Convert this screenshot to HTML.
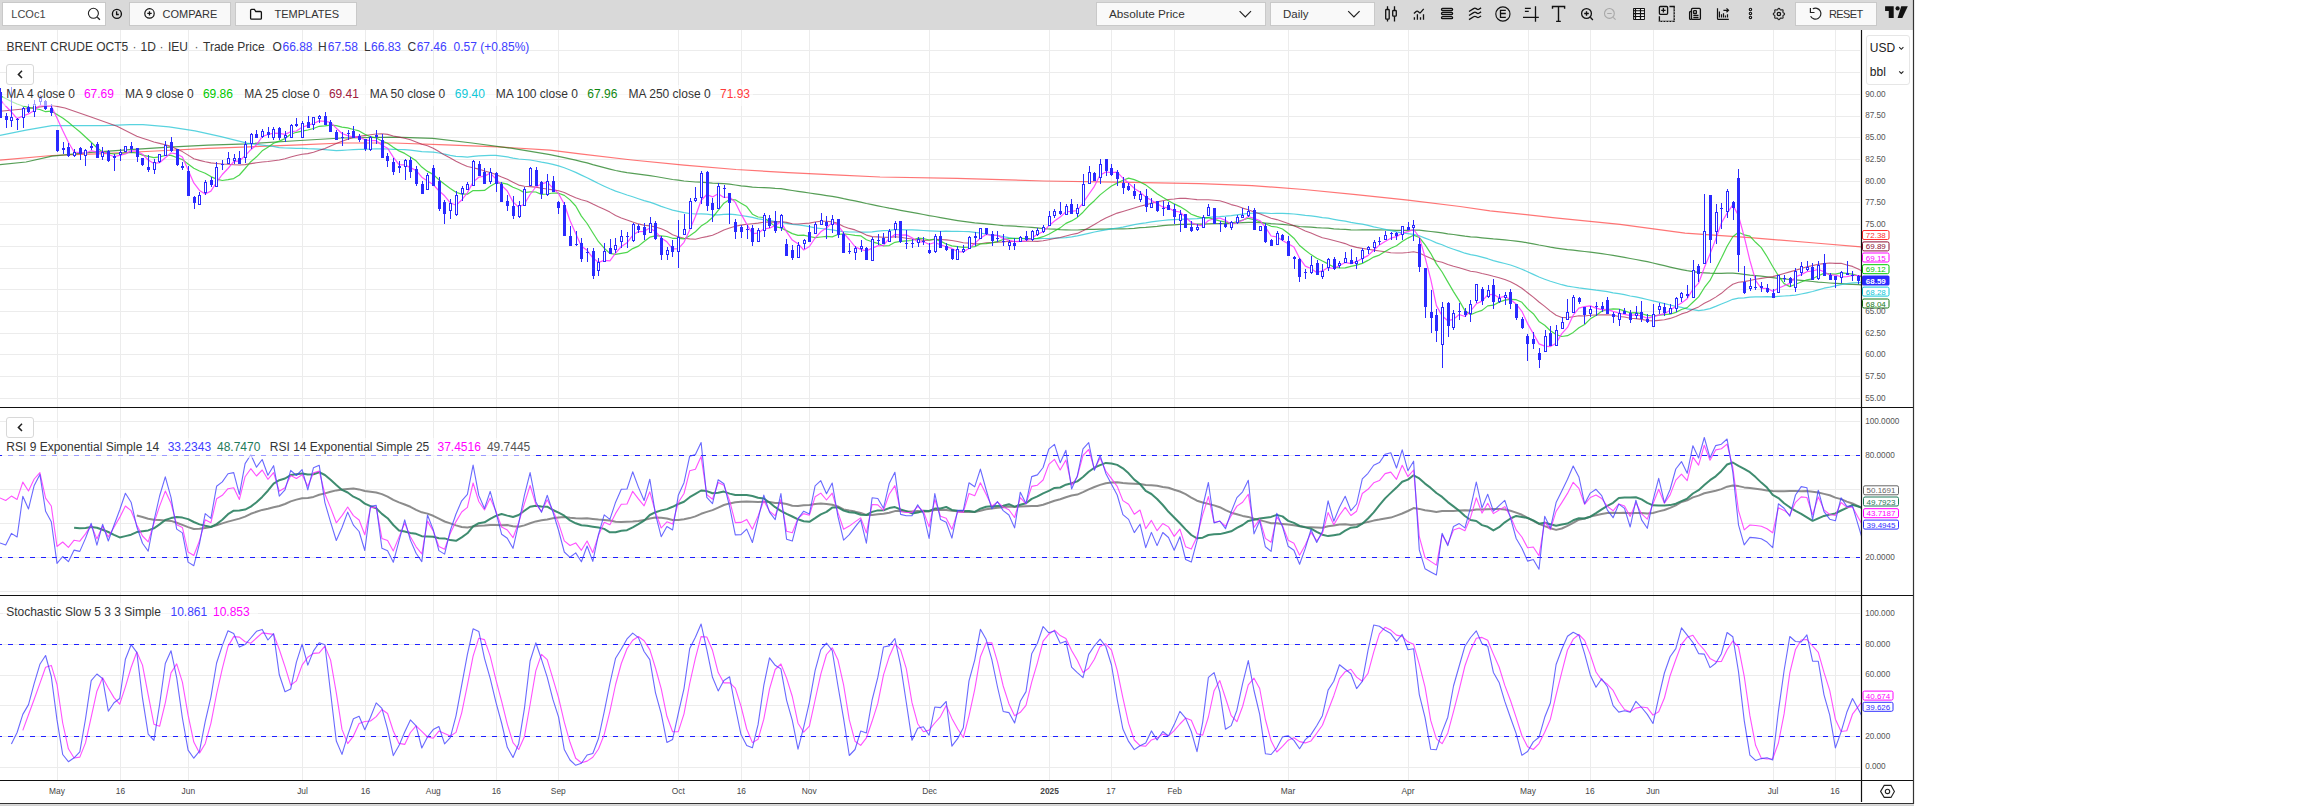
<!DOCTYPE html>
<html><head><meta charset="utf-8"><style>
html,body{margin:0;padding:0;background:#fff;width:2304px;height:806px;overflow:hidden;position:relative;font-family:'Liberation Sans',sans-serif;}
</style></head><body>
<div style="position:absolute;left:0;top:0;width:1913px;height:30px;background:#d9d9d9"></div><div style="position:absolute;left:2px;top:2px;width:104px;height:24px;box-sizing:border-box;background:#fff;border:1px solid #c9c9c9"></div><div style="position:absolute;left:11.3px;top:8.18px;font-size:11px;line-height:12.65px;color:#444;white-space:nowrap;font-family:'Liberation Sans',sans-serif;">LCOc1</div><div style="position:absolute;left:129px;top:2px;width:102px;height:24px;box-sizing:border-box;background:#f9f9f9;border:1px solid #c9c9c9"></div><div style="position:absolute;left:162.6px;top:8.18px;font-size:11px;line-height:12.65px;color:#333;white-space:nowrap;font-family:'Liberation Sans',sans-serif;">COMPARE</div><div style="position:absolute;left:235px;top:2px;width:122px;height:24px;box-sizing:border-box;background:#f9f9f9;border:1px solid #c9c9c9"></div><div style="position:absolute;left:274.5px;top:8.18px;font-size:11px;line-height:12.65px;color:#333;white-space:nowrap;font-family:'Liberation Sans',sans-serif;">TEMPLATES</div><div style="position:absolute;left:1096px;top:2px;width:170px;height:24px;box-sizing:border-box;background:#f9f9f9;border:1px solid #c9c9c9"></div><div style="position:absolute;left:1109px;top:7.49px;font-size:11.75px;line-height:13.51px;color:#333;white-space:nowrap;font-family:'Liberation Sans',sans-serif;">Absolute Price</div><div style="position:absolute;left:1270px;top:2px;width:105px;height:24px;box-sizing:border-box;background:#f9f9f9;border:1px solid #c9c9c9"></div><div style="position:absolute;left:1283px;top:7.72px;font-size:11.5px;line-height:13.22px;color:#333;white-space:nowrap;font-family:'Liberation Sans',sans-serif;">Daily</div><div style="position:absolute;left:1795px;top:2px;width:82px;height:24px;box-sizing:border-box;background:#f9f9f9;border:1px solid #c9c9c9"></div><div style="position:absolute;left:1829px;top:8.18px;font-size:11px;line-height:12.65px;color:#333;white-space:nowrap;font-family:'Liberation Sans',sans-serif;letter-spacing:-0.6px;">RESET</div><svg style="position:absolute;left:0;top:0" width="1913" height="30"><circle cx="93.4" cy="13.3" r="5" stroke="#222" fill="none" stroke-width="1.1"/><path d="M97.3 17.2l2.6 2.6" stroke="#222" stroke-width="1.3"/><circle cx="116.9" cy="13.9" r="4.5" stroke="#111" fill="none" stroke-width="1.35"/><path d="M116.6 11.2v3.3h2.2" stroke="#111" fill="none" stroke-width="1.3"/><circle cx="149.5" cy="13.4" r="4.7" stroke="#111" fill="none" stroke-width="1.2"/><path d="M149.5 11.2v4.4M147.3 13.4h4.4" stroke="#111" stroke-width="1.3"/><path d="M250.6 10.4a1 1 0 0 1 1-1h2.8l1.4 2.1h4.6a1 1 0 0 1 1 1v5.7a1 1 0 0 1-1 1h-8.8a1 1 0 0 1-1-1z" stroke="#111" fill="none" stroke-width="1.3"/><path d="M1239.6 11.2L1245.3 16.9L1251 11.2M1348.2 11.2L1353.9 16.9L1359.6 11.2" stroke="#222" fill="none" stroke-width="1.2"/><rect x="1385.7" y="9.5" width="3.5" height="9.7" rx="0.8" stroke="#111" fill="none" stroke-width="1.3"/><rect x="1392.7" y="10.5" width="3.6" height="5.7" rx="0.8" stroke="#111" fill="none" stroke-width="1.3"/><path d="M1387.5 6.2v3.3M1387.5 19.2v2.4M1394.5 6.2v4.3M1394.5 16.2v5.4" stroke="#111" fill="none" stroke-width="1.3"/><path d="M1413.9 13.6l2.6-2.3q0.6-0.5 1.2 0l1.6 1.3q0.6 0.4 1.2 0l3.2-3.7M1414.4 17.3v2.4M1417.4 14.3v5.4M1420.5 17.3v2.4M1423.5 14.3v5.4" stroke="#111" fill="none" stroke-width="1.3"/><rect x="1441.5" y="8.4" width="11.1" height="2.1" rx="1.05" stroke="#111" fill="none" stroke-width="1.3"/><rect x="1441.5" y="12.5" width="11.1" height="2.1" rx="1.05" stroke="#111" fill="none" stroke-width="1.3"/><rect x="1441.5" y="16.6" width="11.1" height="2.1" rx="1.05" stroke="#111" fill="none" stroke-width="1.3"/><path d="M1469 11.5l4.6-2.9q1.3-0.8 2.6 0l0.9 0.6q0.9 0.6 1.8 0l2.2-1.3" stroke="#111" fill="none" stroke-width="1.3"/><path d="M1469 15.5l4.6-2.9q1.3-0.8 2.6 0l0.9 0.6q0.9 0.6 1.8 0l2.2-1.3" stroke="#111" fill="none" stroke-width="1.3"/><path d="M1469 19.6l4.6-2.9q1.3-0.8 2.6 0l0.9 0.6q0.9 0.6 1.8 0l2.2-1.3" stroke="#111" fill="none" stroke-width="1.3"/><circle cx="1502.9" cy="14" r="7.1" stroke="#111" fill="none" stroke-width="1.15"/><path d="M1505.8 10.3h-5.3v7.15h5.3M1500.5 13.5h5.3" stroke="#111" fill="none" stroke-width="1.3"/><path d="M1535.5 6.2v15.6M1523 17.45h15.8M1524.9 8.4h5.9M1524.9 11.4h3.85" stroke="#111" fill="none" stroke-width="1.3"/><path d="M1552.5 8.8v-2.3h12.1v2.3M1558.5 6.5v14.9M1556.1 21.4h4.7" stroke="#111" fill="none" stroke-width="1.4"/><circle cx="1586.5" cy="13.46" r="4.9" stroke="#111" fill="none" stroke-width="1.3"/><path d="M1586.5 11.2v4.6M1584.2 13.5h4.6M1590.3 17.3l2.6 2.6" stroke="#111" fill="none" stroke-width="1.35"/><circle cx="1609.4" cy="13.46" r="4.9" stroke="#a8a8a8" fill="none" stroke-width="1.1"/><path d="M1607.2 13.5h4.5M1613.2 17.3l2.4 2.4" stroke="#a8a8a8" fill="none" stroke-width="1.1"/><rect x="1633" y="7.9" width="12" height="12" rx="0.8" fill="#111"/><rect x="1633.9" y="8.9" width="1.0" height="1.3" rx="0.4" fill="#f2f2f2"/><rect x="1636" y="8.9" width="4.0" height="1.3" rx="0.4" fill="#f2f2f2"/><rect x="1641" y="8.9" width="3.1" height="1.3" rx="0.4" fill="#f2f2f2"/><rect x="1633.9" y="11.2" width="1.0" height="1.7" rx="0.4" fill="#f2f2f2"/><rect x="1636" y="11.2" width="4.0" height="1.7" rx="0.4" fill="#f2f2f2"/><rect x="1641" y="11.2" width="3.1" height="1.7" rx="0.4" fill="#f2f2f2"/><rect x="1633.9" y="14.2" width="1.0" height="1.7" rx="0.4" fill="#f2f2f2"/><rect x="1636" y="14.2" width="4.0" height="1.7" rx="0.4" fill="#f2f2f2"/><rect x="1641" y="14.2" width="3.1" height="1.7" rx="0.4" fill="#f2f2f2"/><rect x="1633.9" y="17.1" width="1.0" height="1.8" rx="0.4" fill="#f2f2f2"/><rect x="1636" y="17.1" width="4.0" height="1.8" rx="0.4" fill="#f2f2f2"/><rect x="1641" y="17.1" width="3.1" height="1.8" rx="0.4" fill="#f2f2f2"/><rect x="1659.4" y="6.5" width="8.2" height="7.8" rx="1" stroke="#111" fill="none" stroke-width="1.3"/><path d="M1663.4 8.1v4.4M1661.2 10.3h4.4" stroke="#111" fill="none" stroke-width="1.3"/><path d="M1669.5 6.5h4.7v14.9h-14.8v-5.2" stroke="#111" fill="none" stroke-width="1.3"/><path d="M1674.2 8.5v12.9h-14.8" stroke="#d9d9d9" fill="none" stroke-width="0.8" stroke-dasharray="1.4,1.6" stroke-dashoffset="0.5"/><rect x="1691.5" y="8.4" width="8.9" height="11" rx="1" stroke="#111" fill="none" stroke-width="1.3"/><rect x="1693.6" y="10.7" width="2.8" height="2.8" rx="0.6" stroke="#111" fill="none" stroke-width="1.3"/><path d="M1693.3 15.4h5.2M1693.3 17.5h5.2M1691.5 11.5h-1a0.9 0.9 0 0 0-0.9 0.9v6.1a0.9 0.9 0 0 0 0.9 0.9h1" stroke="#111" fill="none" stroke-width="1.3"/><path d="M1717.5 8.2v10.2a1 1 0 0 0 1 1h10.3M1719.4 11.4v6M1721.5 14.2v3.2M1723.5 13.3v4.1M1725.45 15.4v2M1727.5 14.2v3.2M1723.4 10.3h5M1726.5 8.4l2 1.9-2 1.9" stroke="#111" fill="none" stroke-width="1.2"/><circle cx="1750.45" cy="9.5" r="1.2" stroke="#111" fill="none" stroke-width="1.1"/><circle cx="1750.45" cy="13.46" r="1.2" stroke="#111" fill="none" stroke-width="1.1"/><circle cx="1750.45" cy="17.45" r="1.2" stroke="#111" fill="none" stroke-width="1.1"/><polygon points="1784.55,14.00 1784.33,14.54 1783.80,14.98 1783.24,15.32 1782.92,15.66 1782.90,16.14 1783.06,16.78 1783.12,17.46 1782.90,18.00 1782.36,18.22 1781.68,18.16 1781.04,18.00 1780.56,18.02 1780.22,18.34 1779.88,18.90 1779.44,19.43 1778.90,19.65 1778.36,19.43 1777.92,18.90 1777.58,18.34 1777.24,18.02 1776.76,18.00 1776.12,18.16 1775.44,18.22 1774.90,18.00 1774.68,17.46 1774.74,16.78 1774.90,16.14 1774.88,15.66 1774.56,15.32 1774.00,14.98 1773.47,14.54 1773.25,14.00 1773.47,13.46 1774.00,13.02 1774.56,12.68 1774.88,12.34 1774.90,11.86 1774.74,11.22 1774.68,10.54 1774.90,10.00 1775.44,9.78 1776.12,9.84 1776.76,10.00 1777.24,9.98 1777.58,9.66 1777.92,9.10 1778.36,8.57 1778.90,8.35 1779.44,8.57 1779.88,9.10 1780.22,9.66 1780.56,9.98 1781.04,10.00 1781.68,9.84 1782.36,9.78 1782.90,10.00 1783.12,10.54 1783.06,11.22 1782.90,11.86 1782.92,12.34 1783.24,12.68 1783.80,13.02 1784.33,13.46" stroke="#222" fill="none" stroke-width="1.1"/><circle cx="1778.9" cy="14" r="1.7" stroke="#111" fill="none" stroke-width="1.3"/><path d="M1812.8 8.8A5.5 5.5 0 1 1 1810.6 16.3" stroke="#222" fill="none" stroke-width="1.2"/><path d="M1810.4 8v4.5h4.1" stroke="#222" fill="none" stroke-width="1.2"/><path d="M1885.1 6.25h8.6v11.75h-4.95v-7.1h-3.65z" fill="#111"/><circle cx="1897.6" cy="8.4" r="2.1" fill="#111"/><path d="M1901.25 6.25h6.55l-5.5 11.75h-4.7z" fill="#111"/></svg>
<svg width="2304" height="806" style="position:absolute;left:0;top:0"><line x1="57.5" y1="30" x2="57.5" y2="780" stroke="#ececec" stroke-width="1"/><line x1="120.5" y1="30" x2="120.5" y2="780" stroke="#ececec" stroke-width="1"/><line x1="188.5" y1="30" x2="188.5" y2="780" stroke="#ececec" stroke-width="1"/><line x1="302.5" y1="30" x2="302.5" y2="780" stroke="#ececec" stroke-width="1"/><line x1="365.5" y1="30" x2="365.5" y2="780" stroke="#ececec" stroke-width="1"/><line x1="433.5" y1="30" x2="433.5" y2="780" stroke="#ececec" stroke-width="1"/><line x1="496.5" y1="30" x2="496.5" y2="780" stroke="#ececec" stroke-width="1"/><line x1="558.5" y1="30" x2="558.5" y2="780" stroke="#ececec" stroke-width="1"/><line x1="678.5" y1="30" x2="678.5" y2="780" stroke="#ececec" stroke-width="1"/><line x1="741.5" y1="30" x2="741.5" y2="780" stroke="#ececec" stroke-width="1"/><line x1="809.5" y1="30" x2="809.5" y2="780" stroke="#ececec" stroke-width="1"/><line x1="929.5" y1="30" x2="929.5" y2="780" stroke="#ececec" stroke-width="1"/><line x1="1049.5" y1="30" x2="1049.5" y2="780" stroke="#ececec" stroke-width="1"/><line x1="1111.5" y1="30" x2="1111.5" y2="780" stroke="#ececec" stroke-width="1"/><line x1="1174.5" y1="30" x2="1174.5" y2="780" stroke="#ececec" stroke-width="1"/><line x1="1288.5" y1="30" x2="1288.5" y2="780" stroke="#ececec" stroke-width="1"/><line x1="1408.5" y1="30" x2="1408.5" y2="780" stroke="#ececec" stroke-width="1"/><line x1="1528.5" y1="30" x2="1528.5" y2="780" stroke="#ececec" stroke-width="1"/><line x1="1590.5" y1="30" x2="1590.5" y2="780" stroke="#ececec" stroke-width="1"/><line x1="1653.5" y1="30" x2="1653.5" y2="780" stroke="#ececec" stroke-width="1"/><line x1="1773.5" y1="30" x2="1773.5" y2="780" stroke="#ececec" stroke-width="1"/><line x1="1835.5" y1="30" x2="1835.5" y2="780" stroke="#ececec" stroke-width="1"/><line x1="0" y1="50.5" x2="1860" y2="50.5" stroke="#ececec" stroke-width="1"/><line x1="0" y1="72.5" x2="1860" y2="72.5" stroke="#ececec" stroke-width="1"/><line x1="0" y1="94.5" x2="1860" y2="94.5" stroke="#ececec" stroke-width="1"/><line x1="0" y1="116.5" x2="1860" y2="116.5" stroke="#ececec" stroke-width="1"/><line x1="0" y1="137.5" x2="1860" y2="137.5" stroke="#ececec" stroke-width="1"/><line x1="0" y1="159.5" x2="1860" y2="159.5" stroke="#ececec" stroke-width="1"/><line x1="0" y1="181.5" x2="1860" y2="181.5" stroke="#ececec" stroke-width="1"/><line x1="0" y1="202.5" x2="1860" y2="202.5" stroke="#ececec" stroke-width="1"/><line x1="0" y1="224.5" x2="1860" y2="224.5" stroke="#ececec" stroke-width="1"/><line x1="0" y1="246.5" x2="1860" y2="246.5" stroke="#ececec" stroke-width="1"/><line x1="0" y1="268.5" x2="1860" y2="268.5" stroke="#ececec" stroke-width="1"/><line x1="0" y1="289.5" x2="1860" y2="289.5" stroke="#ececec" stroke-width="1"/><line x1="0" y1="311.5" x2="1860" y2="311.5" stroke="#ececec" stroke-width="1"/><line x1="0" y1="333.5" x2="1860" y2="333.5" stroke="#ececec" stroke-width="1"/><line x1="0" y1="354.5" x2="1860" y2="354.5" stroke="#ececec" stroke-width="1"/><line x1="0" y1="376.5" x2="1860" y2="376.5" stroke="#ececec" stroke-width="1"/><line x1="0" y1="398.5" x2="1860" y2="398.5" stroke="#ececec" stroke-width="1"/><line x1="0" y1="421.5" x2="1860" y2="421.5" stroke="#ececec" stroke-width="1"/><line x1="0" y1="455.5" x2="1860" y2="455.5" stroke="#ececec" stroke-width="1"/><line x1="0" y1="489.5" x2="1860" y2="489.5" stroke="#ececec" stroke-width="1"/><line x1="0" y1="523.5" x2="1860" y2="523.5" stroke="#ececec" stroke-width="1"/><line x1="0" y1="557.5" x2="1860" y2="557.5" stroke="#ececec" stroke-width="1"/><line x1="0" y1="591.5" x2="1860" y2="591.5" stroke="#ececec" stroke-width="1"/><line x1="0" y1="613.5" x2="1860" y2="613.5" stroke="#ececec" stroke-width="1"/><line x1="0" y1="644.5" x2="1860" y2="644.5" stroke="#ececec" stroke-width="1"/><line x1="0" y1="675.5" x2="1860" y2="675.5" stroke="#ececec" stroke-width="1"/><line x1="0" y1="705.5" x2="1860" y2="705.5" stroke="#ececec" stroke-width="1"/><line x1="0" y1="736.5" x2="1860" y2="736.5" stroke="#ececec" stroke-width="1"/><line x1="0" y1="767.5" x2="1860" y2="767.5" stroke="#ececec" stroke-width="1"/><line x1="0" y1="455.5" x2="1860" y2="455.5" stroke="#2020ff" stroke-width="1" stroke-dasharray="5,6" stroke-dashoffset="3"/><line x1="0" y1="644.5" x2="1860" y2="644.5" stroke="#2020ff" stroke-width="1" stroke-dasharray="5,6" stroke-dashoffset="3"/><line x1="0" y1="557.5" x2="1860" y2="557.5" stroke="#2020ff" stroke-width="1" stroke-dasharray="5,6" stroke-dashoffset="3"/><line x1="0" y1="736.5" x2="1860" y2="736.5" stroke="#2020ff" stroke-width="1" stroke-dasharray="5,6" stroke-dashoffset="3"/><defs><clipPath id="cp"><rect x="0" y="30" width="1861" height="377"/></clipPath><clipPath id="cr"><rect x="0" y="408" width="1861" height="187"/></clipPath><clipPath id="cs"><rect x="0" y="596" width="1861" height="184"/></clipPath></defs><g clip-path="url(#cp)"><path d="M0.0,160.1 L52.0,155.5 L104.0,153.6 L156.0,151.0 L208.0,148.4 L260.0,146.4 L300.0,144.8 L342.0,143.0 L394.0,143.0 L446.0,144.9 L498.0,146.9 L550.0,150.1 L580.0,153.9 L632.0,160.0 L684.0,165.2 L736.0,169.5 L788.0,172.6 L840.0,175.2 L880.0,177.0 L957.0,178.4 L1044.0,181.0 L1130.0,182.4 L1200.0,183.7 L1252.0,185.6 L1304.0,189.5 L1356.0,194.7 L1408.0,200.2 L1460.0,206.5 L1490.0,210.8 L1555.0,217.8 L1620.0,224.3 L1685.0,233.2 L1750.0,237.6 L1815.0,243.0 L1861.0,246.9 L1862.0,247.0" fill="none" stroke="#ff3b3b" stroke-width="1.2" stroke-opacity="0.7" stroke-linejoin="round" /><path d="M0.0,164.7 L26.0,162.0 L52.0,156.2 L91.0,152.3 L130.0,149.7 L169.0,147.1 L208.0,145.1 L247.0,143.8 L300.0,140.5 L342.0,138.0 L394.0,137.1 L433.0,138.4 L472.0,143.0 L511.0,148.2 L550.0,154.7 L564.3,157.6 L570.0,158.9 L575.7,160.2 L581.4,161.6 L587.1,162.9 L592.8,164.6 L598.5,166.1 L604.2,167.6 L609.9,169.1 L615.6,170.5 L621.3,171.7 L627.0,172.6 L632.7,173.3 L638.4,174.1 L644.1,174.9 L649.8,175.6 L655.5,176.5 L661.2,177.5 L666.9,178.5 L672.6,179.5 L678.3,180.2 L684.0,181.0 L689.7,181.5 L695.4,182.0 L701.1,182.2 L706.8,182.7 L712.5,183.2 L718.2,183.3 L723.9,183.6 L729.6,184.1 L735.3,185.0 L741.0,185.8 L746.7,186.4 L752.4,187.1 L758.1,187.5 L763.8,187.6 L769.5,187.9 L775.2,188.4 L780.9,188.7 L786.6,189.6 L792.3,190.5 L798.0,191.4 L803.7,192.2 L809.4,193.0 L815.1,193.8 L820.8,194.7 L826.5,195.6 L832.2,196.4 L837.9,197.4 L843.6,198.7 L849.3,199.8 L855.0,200.9 L860.7,202.2 L866.4,203.5 L872.1,204.6 L877.8,205.8 L883.5,207.0 L889.2,208.2 L894.9,209.2 L900.6,210.3 L906.3,211.3 L912.0,212.4 L917.7,213.4 L923.4,214.5 L929.1,215.6 L934.8,216.5 L940.5,217.6 L946.2,218.7 L951.9,219.7 L957.6,220.6 L963.3,221.4 L969.0,222.1 L974.7,222.9 L980.4,223.4 L986.1,223.9 L991.8,224.4 L997.5,225.0 L1003.2,225.6 L1008.9,225.9 L1014.6,226.2 L1020.3,226.6 L1026.0,227.0 L1031.7,227.4 L1037.4,227.9 L1043.1,228.6 L1048.8,229.0 L1054.5,229.2 L1060.2,229.7 L1065.9,229.9 L1071.6,230.0 L1077.3,230.0 L1083.0,229.7 L1088.7,229.4 L1094.4,229.3 L1100.1,229.2 L1105.8,229.1 L1111.5,228.9 L1117.2,228.9 L1122.9,228.8 L1128.6,228.7 L1134.3,228.3 L1140.0,227.7 L1145.7,227.4 L1151.4,226.8 L1157.1,226.4 L1162.8,225.7 L1168.5,225.2 L1174.2,224.8 L1179.9,224.4 L1185.6,224.3 L1191.3,224.2 L1197.0,224.1 L1202.7,224.1 L1208.4,223.8 L1214.1,223.7 L1219.8,223.7 L1225.5,223.6 L1231.2,223.3 L1236.9,223.0 L1242.6,222.6 L1248.3,222.3 L1254.0,222.3 L1259.7,222.6 L1265.4,223.0 L1271.1,223.7 L1276.8,224.0 L1282.5,224.3 L1288.2,225.0 L1293.9,225.7 L1299.6,226.5 L1305.3,226.9 L1311.0,227.2 L1316.7,227.7 L1322.4,228.0 L1328.1,228.2 L1333.8,228.8 L1339.5,229.2 L1345.2,229.4 L1350.9,229.9 L1356.6,230.0 L1362.3,229.9 L1368.0,229.9 L1373.7,229.9 L1379.4,229.9 L1385.1,230.0 L1390.8,230.2 L1396.5,230.3 L1402.2,230.4 L1407.9,230.3 L1413.6,230.0 L1419.3,230.2 L1425.0,230.8 L1430.7,231.5 L1436.4,232.2 L1442.1,232.9 L1447.8,233.8 L1453.5,234.5 L1459.2,235.3 L1464.9,236.2 L1470.6,236.8 L1476.3,237.2 L1482.0,237.8 L1487.7,238.3 L1493.4,238.9 L1499.1,239.3 L1504.8,239.9 L1510.5,240.5 L1516.2,241.2 L1521.9,241.9 L1527.6,242.8 L1533.3,243.8 L1539.0,245.0 L1544.7,246.0 L1550.4,247.2 L1556.1,248.1 L1561.8,248.9 L1567.5,249.7 L1573.2,250.2 L1578.9,250.8 L1584.6,251.5 L1590.3,252.2 L1596.0,252.9 L1601.7,253.7 L1607.4,254.5 L1613.1,255.4 L1618.8,256.4 L1624.5,257.4 L1630.2,258.5 L1635.9,259.5 L1641.6,260.6 L1647.3,261.7 L1653.0,263.0 L1658.7,264.4 L1664.4,265.7 L1670.1,267.1 L1675.8,268.4 L1681.5,269.6 L1687.2,270.7 L1692.9,271.6 L1698.6,272.4 L1704.3,272.8 L1710.0,273.2 L1715.7,273.3 L1721.4,273.3 L1727.1,273.1 L1732.8,273.1 L1738.5,273.6 L1744.2,274.3 L1749.9,275.1 L1755.6,275.7 L1761.3,276.2 L1767.0,276.9 L1772.7,277.7 L1778.4,278.4 L1784.1,278.9 L1789.8,279.5 L1795.5,279.9 L1801.2,280.4 L1806.9,280.9 L1812.6,281.5 L1818.3,282.1 L1824.0,282.5 L1829.7,283.0 L1835.4,283.4 L1841.1,283.7 L1846.8,284.1 L1852.5,284.4 L1858.2,284.7 L1862.0,284.9" fill="none" stroke="#1e7d1e" stroke-width="1.2" stroke-opacity="0.75" stroke-linejoin="round" /><path d="M0.0,135.4 L26.0,130.2 L52.0,125.6 L78.0,125.6 L104.0,125.6 L130.0,124.7 L143.0,124.7 L169.0,126.9 L195.0,130.8 L221.0,136.7 L247.0,143.2 L273.0,146.4 L279.3,147.6 L285.0,148.0 L290.7,148.1 L296.4,148.3 L302.1,148.3 L307.8,148.7 L313.5,148.8 L319.2,149.1 L324.9,149.6 L330.6,150.1 L336.3,150.6 L342.0,150.3 L347.7,150.0 L353.4,149.6 L359.1,149.4 L364.8,149.3 L370.5,149.0 L376.2,148.8 L381.9,148.9 L387.6,149.0 L393.3,149.3 L399.0,149.5 L404.7,149.6 L410.4,150.1 L416.1,150.8 L421.8,151.6 L427.5,151.8 L433.2,152.1 L438.9,153.0 L444.6,154.2 L450.3,155.4 L456.0,156.3 L461.7,156.7 L467.4,157.1 L473.1,156.4 L478.8,155.8 L484.5,155.6 L490.2,155.4 L495.9,155.4 L501.6,156.1 L507.3,156.9 L513.0,158.1 L518.7,159.0 L524.4,159.5 L530.1,160.0 L535.8,161.0 L541.5,162.2 L547.2,163.2 L552.9,164.3 L558.6,165.9 L564.3,167.8 L570.0,170.0 L575.7,172.4 L581.4,175.1 L587.1,177.7 L592.8,180.6 L598.5,183.5 L604.2,186.2 L609.9,188.8 L615.6,191.1 L621.3,193.0 L627.0,195.0 L632.7,196.8 L638.4,198.7 L644.1,200.6 L649.8,202.1 L655.5,204.1 L661.2,206.4 L666.9,208.3 L672.6,210.1 L678.3,211.4 L684.0,212.7 L689.7,213.5 L695.4,214.0 L701.1,213.8 L706.8,214.1 L712.5,214.8 L718.2,214.8 L723.9,214.4 L729.6,214.1 L735.3,214.7 L741.0,215.5 L746.7,216.3 L752.4,217.4 L758.1,218.8 L763.8,219.6 L769.5,220.4 L775.2,221.6 L780.9,222.2 L786.6,223.3 L792.3,224.4 L798.0,224.9 L803.7,225.7 L809.4,226.7 L815.1,227.8 L820.8,228.5 L826.5,229.2 L832.2,229.9 L837.9,230.8 L843.6,231.7 L849.3,232.0 L855.0,232.0 L860.7,232.1 L866.4,232.1 L872.1,231.8 L877.8,231.1 L883.5,230.7 L889.2,230.3 L894.9,229.7 L900.6,229.6 L906.3,229.8 L912.0,229.9 L917.7,230.2 L923.4,230.5 L929.1,230.8 L934.8,231.1 L940.5,231.3 L946.2,231.2 L951.9,231.3 L957.6,231.3 L963.3,231.5 L969.0,231.7 L974.7,232.4 L980.4,233.0 L986.1,234.2 L991.8,234.9 L997.5,235.5 L1003.2,236.6 L1008.9,237.7 L1014.6,238.5 L1020.3,238.6 L1026.0,238.8 L1031.7,238.8 L1037.4,238.6 L1043.1,238.5 L1048.8,238.5 L1054.5,238.2 L1060.2,237.9 L1065.9,237.7 L1071.6,236.9 L1077.3,235.9 L1083.0,234.6 L1088.7,233.3 L1094.4,232.0 L1100.1,230.8 L1105.8,229.8 L1111.5,228.8 L1117.2,228.0 L1122.9,227.1 L1128.6,225.8 L1134.3,224.7 L1140.0,223.7 L1145.7,222.9 L1151.4,221.8 L1157.1,221.2 L1162.8,220.5 L1168.5,219.9 L1174.2,219.6 L1179.9,219.4 L1185.6,219.1 L1191.3,218.9 L1197.0,218.6 L1202.7,218.1 L1208.4,217.4 L1214.1,216.8 L1219.8,216.6 L1225.5,216.2 L1231.2,215.6 L1236.9,214.8 L1242.6,214.1 L1248.3,213.3 L1254.0,213.2 L1259.7,212.9 L1265.4,213.2 L1271.1,213.5 L1276.8,213.3 L1282.5,213.4 L1288.2,213.6 L1293.9,214.0 L1299.6,214.6 L1305.3,215.3 L1311.0,215.8 L1316.7,216.7 L1322.4,217.6 L1328.1,218.2 L1333.8,219.3 L1339.5,220.3 L1345.2,221.2 L1350.9,222.4 L1356.6,223.3 L1362.3,224.1 L1368.0,225.4 L1373.7,226.8 L1379.4,228.0 L1385.1,229.4 L1390.8,230.7 L1396.5,231.9 L1402.2,232.9 L1407.9,233.7 L1413.6,234.4 L1419.3,235.8 L1425.0,238.1 L1430.7,240.3 L1436.4,242.9 L1442.1,244.8 L1447.8,247.2 L1453.5,249.2 L1459.2,251.1 L1464.9,253.2 L1470.6,254.7 L1476.3,255.7 L1482.0,257.2 L1487.7,258.7 L1493.4,260.6 L1499.1,262.1 L1504.8,263.5 L1510.5,265.0 L1516.2,267.0 L1521.9,269.2 L1527.6,271.7 L1533.3,274.4 L1539.0,277.0 L1544.7,279.2 L1550.4,281.3 L1556.1,283.0 L1561.8,284.7 L1567.5,286.2 L1573.2,287.0 L1578.9,287.9 L1584.6,288.6 L1590.3,289.3 L1596.0,290.2 L1601.7,290.8 L1607.4,291.7 L1613.1,292.8 L1618.8,293.7 L1624.5,294.7 L1630.2,296.0 L1635.9,296.9 L1641.6,298.1 L1647.3,299.5 L1653.0,300.8 L1658.7,302.1 L1664.4,303.6 L1670.1,305.0 L1675.8,306.3 L1681.5,307.4 L1687.2,308.8 L1692.9,309.6 L1698.6,310.6 L1704.3,309.9 L1710.0,308.6 L1715.7,306.4 L1721.4,304.0 L1727.1,301.7 L1732.8,299.3 L1738.5,298.1 L1744.2,297.8 L1749.9,297.2 L1755.6,296.8 L1761.3,296.9 L1767.0,296.7 L1772.7,296.9 L1778.4,296.4 L1784.1,296.0 L1789.8,295.7 L1795.5,295.1 L1801.2,294.0 L1806.9,292.8 L1812.6,291.5 L1818.3,289.9 L1824.0,288.2 L1829.7,287.1 L1835.4,285.8 L1841.1,284.6 L1846.8,283.7 L1852.5,282.9 L1858.2,282.6 L1862.0,282.4" fill="none" stroke="#22c4d4" stroke-width="1.2" stroke-opacity="0.75" stroke-linejoin="round" /><path d="M0.0,111.3 L26.0,108.7 L52.0,105.4 L65.0,108.0 L91.0,117.0 L117.0,126.3 L136.8,136.3 L142.5,138.2 L148.2,140.1 L153.9,142.0 L159.6,143.4 L165.3,144.8 L171.0,146.4 L176.7,148.9 L182.4,151.6 L188.1,155.1 L193.8,158.7 L199.5,160.4 L205.2,161.8 L210.9,162.9 L216.6,163.5 L222.3,164.0 L228.0,164.3 L233.7,164.7 L239.4,165.0 L245.1,164.6 L250.8,163.6 L256.5,162.8 L262.2,162.0 L267.9,161.5 L273.6,160.7 L279.3,160.0 L285.0,158.8 L290.7,157.0 L296.4,155.5 L302.1,154.3 L307.8,153.6 L313.5,152.3 L319.2,150.3 L324.9,148.6 L330.6,146.0 L336.3,143.5 L342.0,141.2 L347.7,139.2 L353.4,137.4 L359.1,136.3 L364.8,135.6 L370.5,134.8 L376.2,134.0 L381.9,133.8 L387.6,134.4 L393.3,136.0 L399.0,137.1 L404.7,138.3 L410.4,139.7 L416.1,141.9 L421.8,144.2 L427.5,145.8 L433.2,148.2 L438.9,151.5 L444.6,155.1 L450.3,158.1 L456.0,161.3 L461.7,164.1 L467.4,166.5 L473.1,167.7 L478.8,169.1 L484.5,171.0 L490.2,172.5 L495.9,174.4 L501.6,176.9 L507.3,179.2 L513.0,182.3 L518.7,185.1 L524.4,186.3 L530.1,186.6 L535.8,187.1 L541.5,188.2 L547.2,189.0 L552.9,189.9 L558.6,190.8 L564.3,192.5 L570.0,195.3 L575.7,197.7 L581.4,199.7 L587.1,201.2 L592.8,204.1 L598.5,206.8 L604.2,209.3 L609.9,212.1 L615.6,215.5 L621.3,217.9 L627.0,220.0 L632.7,222.1 L638.4,223.9 L644.1,225.2 L649.8,225.9 L655.5,226.9 L661.2,228.8 L666.9,231.3 L672.6,234.7 L678.3,236.7 L684.0,238.2 L689.7,238.9 L695.4,239.2 L701.1,237.8 L706.8,236.6 L712.5,235.2 L718.2,232.8 L723.9,230.0 L729.6,228.1 L735.3,226.3 L741.0,225.1 L746.7,224.2 L752.4,223.7 L758.1,223.1 L763.8,222.3 L769.5,221.9 L775.2,222.1 L780.9,221.5 L786.6,222.4 L792.3,223.8 L798.0,224.0 L803.7,223.5 L809.4,223.1 L815.1,222.0 L820.8,221.3 L826.5,221.2 L832.2,221.9 L837.9,223.4 L843.6,226.6 L849.3,228.4 L855.0,229.9 L860.7,232.3 L866.4,235.1 L872.1,236.6 L877.8,236.9 L883.5,237.3 L889.2,237.4 L894.9,236.7 L900.6,237.2 L906.3,238.3 L912.0,239.0 L917.7,239.3 L923.4,240.4 L929.1,240.2 L934.8,239.4 L940.5,239.5 L946.2,239.9 L951.9,240.5 L957.6,241.5 L963.3,242.7 L969.0,243.1 L974.7,243.9 L980.4,243.7 L986.1,242.9 L991.8,242.5 L997.5,242.1 L1003.2,241.9 L1008.9,241.2 L1014.6,241.5 L1020.3,241.4 L1026.0,241.2 L1031.7,241.2 L1037.4,241.4 L1043.1,240.8 L1048.8,239.7 L1054.5,238.5 L1060.2,237.5 L1065.9,236.0 L1071.6,234.5 L1077.3,233.4 L1083.0,230.8 L1088.7,227.7 L1094.4,224.5 L1100.1,221.1 L1105.8,218.0 L1111.5,215.5 L1117.2,213.1 L1122.9,211.5 L1128.6,209.8 L1134.3,208.0 L1140.0,206.2 L1145.7,204.9 L1151.4,203.3 L1157.1,201.9 L1162.8,200.7 L1168.5,199.5 L1174.2,199.0 L1179.9,198.3 L1185.6,198.4 L1191.3,199.0 L1197.0,199.6 L1202.7,199.8 L1208.4,199.8 L1214.1,200.2 L1219.8,200.8 L1225.5,202.6 L1231.2,204.6 L1236.9,206.0 L1242.6,208.1 L1248.3,209.7 L1254.0,211.9 L1259.7,213.7 L1265.4,215.9 L1271.1,218.2 L1276.8,219.6 L1282.5,221.5 L1288.2,223.4 L1293.9,225.7 L1299.6,228.3 L1305.3,230.9 L1311.0,233.1 L1316.7,235.5 L1322.4,237.8 L1328.1,239.0 L1333.8,240.5 L1339.5,242.0 L1345.2,243.6 L1350.9,245.9 L1356.6,247.4 L1362.3,248.4 L1368.0,249.2 L1373.7,250.1 L1379.4,251.0 L1385.1,251.8 L1390.8,252.7 L1396.5,253.0 L1402.2,253.0 L1407.9,252.5 L1413.6,251.7 L1419.3,253.0 L1425.0,255.7 L1430.7,258.2 L1436.4,261.0 L1442.1,262.2 L1447.8,264.4 L1453.5,266.3 L1459.2,267.8 L1464.9,269.5 L1470.6,271.3 L1476.3,272.0 L1482.0,273.5 L1487.7,274.7 L1493.4,276.3 L1499.1,277.7 L1504.8,279.5 L1510.5,281.8 L1516.2,284.8 L1521.9,288.3 L1527.6,292.7 L1533.3,297.1 L1539.0,302.0 L1544.7,306.4 L1550.4,311.1 L1556.1,315.3 L1561.8,317.5 L1567.5,317.6 L1573.2,316.8 L1578.9,315.7 L1584.6,316.0 L1590.3,315.3 L1596.0,315.0 L1601.7,314.9 L1607.4,314.8 L1613.1,315.3 L1618.8,316.5 L1624.5,317.0 L1630.2,318.2 L1635.9,318.6 L1641.6,319.4 L1647.3,320.5 L1653.0,320.9 L1658.7,320.4 L1664.4,319.8 L1670.1,318.4 L1675.8,316.5 L1681.5,313.9 L1687.2,312.2 L1692.9,309.2 L1698.6,306.9 L1704.3,303.3 L1710.0,300.5 L1715.7,297.1 L1721.4,293.3 L1727.1,288.4 L1732.8,284.3 L1738.5,282.3 L1744.2,281.6 L1749.9,280.5 L1755.6,279.3 L1761.3,278.4 L1767.0,277.5 L1772.7,276.6 L1778.4,275.1 L1784.1,273.5 L1789.8,271.9 L1795.5,270.2 L1801.2,268.6 L1806.9,266.8 L1812.6,265.6 L1818.3,264.3 L1824.0,263.6 L1829.7,263.0 L1835.4,263.4 L1841.1,263.3 L1846.8,265.0 L1852.5,266.4 L1858.2,269.1 L1862.0,271.0" fill="none" stroke="#a81c4a" stroke-width="1.1" stroke-opacity="0.7" stroke-linejoin="round" /><path d="M0.0,95.5 L5.7,98.5 L11.4,101.5 L17.1,104.0 L22.8,106.0 L28.5,107.3 L34.2,108.5 L39.9,109.5 L45.6,111.7 L51.3,111.1 L57.0,114.6 L62.7,118.1 L68.4,122.2 L74.1,127.1 L79.8,131.8 L85.5,137.0 L91.2,142.3 L96.9,147.7 L102.6,152.0 L108.3,153.1 L114.0,154.0 L119.7,153.5 L125.4,152.8 L131.1,152.3 L136.8,153.0 L142.5,155.1 L148.2,156.4 L153.9,157.6 L159.6,156.8 L165.3,155.5 L171.0,155.4 L176.7,157.5 L182.4,159.6 L188.1,164.0 L193.8,168.2 L199.5,171.0 L205.2,173.2 L210.9,176.6 L216.6,179.1 L222.3,180.5 L228.0,179.7 L233.7,178.6 L239.4,175.0 L245.1,168.5 L250.8,161.7 L256.5,156.8 L262.2,150.8 L267.9,147.2 L273.6,143.3 L279.3,141.1 L285.0,138.6 L290.7,134.3 L296.4,132.3 L302.1,131.1 L307.8,130.0 L313.5,128.5 L319.2,126.3 L324.9,125.9 L330.6,125.2 L336.3,125.7 L342.0,127.1 L347.7,127.9 L353.4,129.5 L359.1,130.9 L364.8,134.3 L370.5,136.7 L376.2,138.0 L381.9,141.0 L387.6,143.2 L393.3,147.2 L399.0,150.9 L404.7,153.4 L410.4,156.9 L416.1,160.8 L421.8,167.1 L427.5,171.4 L433.2,174.4 L438.9,179.7 L444.6,184.3 L450.3,188.4 L456.0,192.3 L461.7,194.1 L467.4,194.2 L473.1,190.5 L478.8,190.6 L484.5,190.4 L490.2,186.3 L495.9,183.1 L501.6,182.9 L507.3,184.1 L513.0,187.2 L518.7,189.5 L524.4,192.6 L530.1,191.8 L535.8,192.0 L541.5,194.4 L547.2,194.0 L552.9,193.0 L558.6,193.2 L564.3,195.4 L570.0,199.9 L575.7,206.0 L581.4,216.1 L587.1,223.5 L592.8,232.7 L598.5,241.7 L604.2,248.2 L609.9,253.4 L615.6,254.4 L621.3,253.3 L627.0,252.4 L632.7,248.6 L638.4,246.1 L644.1,241.5 L649.8,237.2 L655.5,235.8 L661.2,235.8 L666.9,236.5 L672.6,238.3 L678.3,238.4 L684.0,238.9 L689.7,235.7 L695.4,231.7 L701.1,226.1 L706.8,222.5 L712.5,217.5 L718.2,210.4 L723.9,203.2 L729.6,199.5 L735.3,199.8 L741.0,203.2 L746.7,206.6 L752.4,214.2 L758.1,217.0 L763.8,217.5 L769.5,221.9 L775.2,226.6 L780.9,227.9 L786.6,230.6 L792.3,233.6 L798.0,235.4 L803.7,235.2 L809.4,236.5 L815.1,237.6 L820.8,237.0 L826.5,236.4 L832.2,236.9 L837.9,234.5 L843.6,233.9 L849.3,234.5 L855.0,235.4 L860.7,235.8 L866.4,239.7 L872.1,241.8 L877.8,243.3 L883.5,246.0 L889.2,245.6 L894.9,242.3 L900.6,241.3 L906.3,240.8 L912.0,240.5 L917.7,238.2 L923.4,238.5 L929.1,240.0 L934.8,239.2 L940.5,241.1 L946.2,244.0 L951.9,245.9 L957.6,246.6 L963.3,247.3 L969.0,247.1 L974.7,246.6 L980.4,243.9 L986.1,243.7 L991.8,242.9 L997.5,241.6 L1003.2,239.5 L1008.9,238.7 L1014.6,238.3 L1020.3,238.3 L1026.0,238.5 L1031.7,238.7 L1037.4,238.3 L1043.1,236.7 L1048.8,234.3 L1054.5,231.0 L1060.2,227.9 L1065.9,223.4 L1071.6,220.9 L1077.3,217.4 L1083.0,212.2 L1088.7,205.8 L1094.4,200.7 L1100.1,194.9 L1105.8,190.4 L1111.5,186.0 L1117.2,183.1 L1122.9,180.2 L1128.6,178.1 L1134.3,179.6 L1140.0,182.0 L1145.7,184.9 L1151.4,189.3 L1157.1,193.7 L1162.8,197.3 L1168.5,200.7 L1174.2,203.9 L1179.9,206.6 L1185.6,210.1 L1191.3,214.2 L1197.0,216.4 L1202.7,218.0 L1208.4,217.6 L1214.1,219.4 L1219.8,220.9 L1225.5,222.1 L1231.2,223.0 L1236.9,221.8 L1242.6,220.0 L1248.3,218.3 L1254.0,219.7 L1259.7,221.8 L1265.4,223.8 L1271.1,226.3 L1276.8,227.0 L1282.5,229.0 L1288.2,233.3 L1293.9,238.2 L1299.6,245.5 L1305.3,250.2 L1311.0,254.6 L1316.7,258.3 L1322.4,261.0 L1328.1,263.9 L1333.8,267.1 L1339.5,268.0 L1345.2,267.8 L1350.9,266.3 L1356.6,265.1 L1362.3,263.4 L1368.0,260.4 L1373.7,257.1 L1379.4,255.1 L1385.1,251.4 L1390.8,248.2 L1396.5,245.7 L1402.2,241.6 L1407.9,238.1 L1413.6,235.3 L1419.3,237.5 L1425.0,244.6 L1430.7,253.3 L1436.4,263.9 L1442.1,272.0 L1447.8,281.9 L1453.5,291.6 L1459.2,300.6 L1464.9,310.6 L1470.6,314.8 L1476.3,312.3 L1482.0,310.4 L1487.7,305.9 L1493.4,305.2 L1499.1,302.1 L1504.8,300.1 L1510.5,299.3 L1516.2,299.7 L1521.9,302.3 L1527.6,308.9 L1533.3,313.7 L1539.0,321.4 L1544.7,325.3 L1550.4,330.7 L1556.1,334.6 L1561.8,336.5 L1567.5,335.7 L1573.2,332.4 L1578.9,327.7 L1584.6,324.5 L1590.3,318.8 L1596.0,315.5 L1601.7,311.3 L1607.4,309.5 L1613.1,308.9 L1618.8,309.1 L1624.5,310.9 L1630.2,312.8 L1635.9,312.6 L1641.6,313.7 L1647.3,315.4 L1653.0,316.0 L1658.7,315.2 L1664.4,314.7 L1670.1,314.2 L1675.8,312.4 L1681.5,309.5 L1687.2,307.6 L1692.9,302.2 L1698.6,296.9 L1704.3,287.7 L1710.0,280.4 L1715.7,269.2 L1721.4,258.1 L1727.1,246.3 L1732.8,236.8 L1738.5,232.3 L1744.2,234.8 L1749.9,236.2 L1755.6,242.3 L1761.3,247.6 L1767.0,256.5 L1772.7,266.5 L1778.4,275.8 L1784.1,283.6 L1789.8,286.6 L1795.5,284.3 L1801.2,282.0 L1806.9,279.8 L1812.6,278.8 L1818.3,275.8 L1824.0,273.4 L1829.7,273.8 L1835.4,274.1 L1841.1,272.9 L1846.8,273.3 L1852.5,274.2 L1858.2,275.8 L1862.0,276.8" fill="none" stroke="#22cc22" stroke-width="1.2" stroke-opacity="0.8" stroke-linejoin="round" /><path d="M0.0,99.5 L5.7,106.0 L11.4,112.0 L17.1,118.6 L22.8,116.0 L28.5,113.9 L34.2,110.5 L39.9,105.4 L45.6,105.7 L51.3,106.1 L57.0,118.1 L62.7,130.6 L68.4,142.2 L74.1,152.0 L79.8,152.6 L85.5,153.0 L91.2,150.7 L96.9,152.0 L102.6,151.6 L108.3,154.2 L114.0,156.7 L119.7,155.3 L125.4,153.9 L131.1,150.9 L136.8,150.9 L142.5,154.2 L148.2,160.0 L153.9,163.4 L159.6,162.7 L165.3,157.7 L171.0,153.0 L176.7,153.8 L182.4,157.1 L188.1,170.0 L193.8,182.9 L199.5,190.4 L205.2,194.0 L210.9,191.1 L216.6,182.2 L222.3,174.5 L228.0,168.5 L233.7,161.7 L239.4,160.9 L245.1,155.8 L250.8,149.7 L256.5,144.8 L262.2,136.6 L267.9,134.5 L273.6,133.2 L279.3,133.3 L285.0,134.4 L290.7,131.8 L296.4,131.0 L302.1,127.3 L307.8,125.4 L313.5,123.5 L319.2,120.9 L324.9,121.4 L330.6,122.4 L336.3,128.2 L342.0,133.5 L347.7,135.6 L353.4,137.1 L359.1,136.9 L364.8,139.8 L370.5,140.7 L376.2,140.6 L381.9,145.2 L387.6,148.2 L393.3,157.1 L399.0,164.6 L404.7,164.9 L410.4,167.6 L416.1,170.4 L421.8,177.2 L427.5,181.0 L433.2,184.5 L438.9,190.8 L444.6,195.8 L450.3,202.8 L456.0,205.2 L461.7,200.0 L467.4,192.8 L473.1,182.1 L478.8,177.2 L484.5,176.1 L490.2,173.1 L495.9,178.9 L501.6,185.4 L507.3,191.0 L513.0,201.9 L518.7,207.2 L524.4,204.0 L530.1,194.5 L535.8,187.0 L541.5,184.0 L547.2,182.1 L552.9,188.2 L558.6,193.6 L564.3,204.3 L570.0,220.5 L575.7,233.4 L581.4,246.2 L587.1,250.3 L592.8,257.8 L598.5,262.4 L604.2,260.4 L609.9,260.9 L615.6,253.1 L621.3,246.5 L627.0,242.8 L632.7,235.3 L638.4,231.6 L644.1,231.3 L649.8,228.1 L655.5,231.7 L661.2,237.9 L666.9,241.8 L672.6,249.0 L678.3,248.7 L684.0,242.3 L689.7,230.0 L695.4,216.5 L701.1,200.5 L706.8,194.5 L712.5,196.9 L718.2,193.7 L723.9,197.5 L729.6,197.0 L735.3,202.4 L741.0,213.9 L746.7,224.1 L752.4,233.6 L758.1,233.2 L763.8,229.0 L769.5,228.2 L775.2,225.4 L780.9,221.7 L786.6,231.9 L792.3,240.1 L798.0,243.7 L803.7,250.0 L809.4,246.5 L815.1,238.0 L820.8,231.8 L826.5,228.1 L832.2,222.4 L837.9,225.0 L843.6,233.2 L849.3,239.5 L855.0,246.7 L860.7,249.4 L866.4,251.0 L872.1,248.1 L877.8,245.9 L883.5,245.4 L889.2,238.4 L894.9,234.4 L900.6,235.1 L906.3,234.9 L912.0,237.8 L917.7,241.8 L923.4,241.8 L929.1,244.2 L934.8,242.5 L940.5,244.8 L946.2,246.8 L951.9,248.4 L957.6,251.6 L963.3,251.8 L969.0,248.6 L974.7,243.4 L980.4,238.2 L986.1,234.5 L991.8,235.4 L997.5,235.4 L1003.2,238.4 L1008.9,240.4 L1014.6,241.7 L1020.3,241.3 L1026.0,241.0 L1031.7,238.2 L1037.4,234.3 L1043.1,231.8 L1048.8,225.9 L1054.5,221.0 L1060.2,217.1 L1065.9,211.7 L1071.6,211.3 L1077.3,210.5 L1083.0,202.9 L1088.7,194.5 L1094.4,186.3 L1100.1,175.1 L1105.8,172.0 L1111.5,172.7 L1117.2,172.1 L1122.9,178.2 L1128.6,183.0 L1134.3,188.4 L1140.0,192.1 L1145.7,196.9 L1151.4,200.2 L1157.1,203.8 L1162.8,207.1 L1168.5,207.8 L1174.2,211.2 L1179.9,212.0 L1185.6,217.2 L1191.3,222.5 L1197.0,225.0 L1202.7,225.9 L1208.4,220.5 L1214.1,218.8 L1219.8,218.0 L1225.5,220.4 L1231.2,224.2 L1236.9,222.5 L1242.6,220.5 L1248.3,216.5 L1254.0,218.4 L1259.7,220.5 L1265.4,227.2 L1271.1,236.0 L1276.8,236.8 L1282.5,240.5 L1288.2,243.8 L1293.9,247.1 L1299.6,258.2 L1305.3,266.1 L1311.0,268.5 L1316.7,272.4 L1322.4,270.9 L1328.1,267.6 L1333.8,268.5 L1339.5,265.6 L1345.2,262.4 L1350.9,263.6 L1356.6,261.6 L1362.3,258.4 L1368.0,255.6 L1373.7,250.2 L1379.4,245.1 L1385.1,241.4 L1390.8,238.2 L1396.5,236.7 L1402.2,233.1 L1407.9,231.7 L1413.6,229.5 L1419.3,237.0 L1425.0,257.1 L1430.7,279.2 L1436.4,305.6 L1442.1,315.8 L1447.8,320.7 L1453.5,319.4 L1459.2,314.5 L1464.9,316.5 L1470.6,311.0 L1476.3,303.8 L1482.0,301.1 L1487.7,294.9 L1493.4,294.3 L1499.1,297.7 L1504.8,296.3 L1510.5,299.7 L1516.2,304.0 L1521.9,311.3 L1527.6,323.6 L1533.3,333.6 L1539.0,343.9 L1544.7,346.1 L1550.4,346.6 L1556.1,343.2 L1561.8,333.6 L1567.5,327.4 L1573.2,315.2 L1578.9,308.1 L1584.6,306.6 L1590.3,305.9 L1596.0,308.1 L1601.7,309.7 L1607.4,309.4 L1613.1,311.4 L1618.8,313.0 L1624.5,314.3 L1630.2,315.7 L1635.9,314.7 L1641.6,316.2 L1647.3,318.1 L1653.0,316.8 L1658.7,315.2 L1664.4,313.7 L1670.1,310.3 L1675.8,306.2 L1681.5,302.9 L1687.2,298.7 L1692.9,289.3 L1698.6,283.2 L1704.3,267.8 L1710.0,254.0 L1715.7,239.4 L1721.4,223.0 L1727.1,213.1 L1732.8,204.9 L1738.5,215.7 L1744.2,236.7 L1749.9,260.5 L1755.6,280.3 L1761.3,288.5 L1767.0,288.3 L1772.7,291.2 L1778.4,288.3 L1784.1,285.8 L1789.8,283.4 L1795.5,276.8 L1801.2,274.6 L1806.9,271.7 L1812.6,271.0 L1818.3,269.4 L1824.0,271.7 L1829.7,274.9 L1835.4,275.1 L1841.1,276.8 L1846.8,276.7 L1852.5,275.4 L1858.2,275.5 L1862.0,275.5" fill="none" stroke="#ff33ff" stroke-width="1.2" stroke-opacity="0.85" stroke-linejoin="round" /><rect x="0" y="88" width="1" height="30" fill="#2a2aff"/><rect x="-1" y="92" width="3" height="26" fill="#2a2aff"/><rect x="6" y="113" width="1" height="15" fill="#2a2aff"/><rect x="5" y="116" width="3" height="4" fill="#2a2aff"/><rect x="11" y="87" width="1" height="40" fill="#2a2aff"/><rect x="10.5" y="117.5" width="2" height="3" fill="#fff" stroke="#2a2aff" stroke-width="1"/><rect x="17" y="118" width="1" height="12" fill="#2a2aff"/><rect x="16" y="119" width="3" height="1" fill="#2a2aff"/><rect x="23" y="107" width="1" height="21" fill="#2a2aff"/><rect x="22.5" y="108.5" width="2" height="9" fill="#fff" stroke="#2a2aff" stroke-width="1"/><rect x="28" y="104" width="1" height="9" fill="#2a2aff"/><rect x="27" y="107" width="3" height="5" fill="#2a2aff"/><rect x="34" y="100" width="1" height="17" fill="#2a2aff"/><rect x="33.5" y="104.5" width="2" height="7" fill="#fff" stroke="#2a2aff" stroke-width="1"/><rect x="40" y="95" width="1" height="10" fill="#2a2aff"/><rect x="39.5" y="98.5" width="2" height="3" fill="#fff" stroke="#2a2aff" stroke-width="1"/><rect x="45" y="100" width="1" height="10" fill="#2a2aff"/><rect x="44" y="101" width="3" height="8" fill="#2a2aff"/><rect x="51" y="104" width="1" height="12" fill="#2a2aff"/><rect x="50" y="108" width="3" height="5" fill="#2a2aff"/><rect x="57" y="130" width="1" height="22" fill="#2a2aff"/><rect x="56" y="130" width="3" height="21" fill="#2a2aff"/><rect x="63" y="142" width="1" height="12" fill="#2a2aff"/><rect x="62" y="148" width="3" height="2" fill="#2a2aff"/><rect x="68" y="143" width="1" height="14" fill="#2a2aff"/><rect x="67" y="147" width="3" height="9" fill="#2a2aff"/><rect x="74" y="149" width="1" height="8" fill="#2a2aff"/><rect x="73.5" y="152.5" width="2" height="3" fill="#fff" stroke="#2a2aff" stroke-width="1"/><rect x="80" y="147" width="1" height="13" fill="#2a2aff"/><rect x="79" y="148" width="3" height="6" fill="#2a2aff"/><rect x="85" y="149" width="1" height="17" fill="#2a2aff"/><rect x="84.5" y="150.5" width="2" height="5" fill="#fff" stroke="#2a2aff" stroke-width="1"/><rect x="91" y="143" width="1" height="7" fill="#2a2aff"/><rect x="90" y="146" width="3" height="2" fill="#2a2aff"/><rect x="97" y="142" width="1" height="16" fill="#2a2aff"/><rect x="96" y="144" width="3" height="14" fill="#2a2aff"/><rect x="102" y="147" width="1" height="13" fill="#2a2aff"/><rect x="101.5" y="152.5" width="2" height="4" fill="#fff" stroke="#2a2aff" stroke-width="1"/><rect x="108" y="150" width="1" height="12" fill="#2a2aff"/><rect x="107" y="151" width="3" height="10" fill="#2a2aff"/><rect x="114" y="154" width="1" height="17" fill="#2a2aff"/><rect x="113" y="156" width="3" height="2" fill="#2a2aff"/><rect x="120" y="149" width="1" height="12" fill="#2a2aff"/><rect x="119.5" y="152.5" width="2" height="2" fill="#fff" stroke="#2a2aff" stroke-width="1"/><rect x="125" y="146" width="1" height="6" fill="#2a2aff"/><rect x="124.5" y="146.5" width="2" height="5" fill="#fff" stroke="#2a2aff" stroke-width="1"/><rect x="131" y="142" width="1" height="11" fill="#2a2aff"/><rect x="130" y="146" width="3" height="3" fill="#2a2aff"/><rect x="137" y="148" width="1" height="14" fill="#2a2aff"/><rect x="136" y="148" width="3" height="9" fill="#2a2aff"/><rect x="142" y="158" width="1" height="8" fill="#2a2aff"/><rect x="141" y="158" width="3" height="7" fill="#2a2aff"/><rect x="148" y="155" width="1" height="17" fill="#2a2aff"/><rect x="147" y="167" width="3" height="3" fill="#2a2aff"/><rect x="154" y="159" width="1" height="15" fill="#2a2aff"/><rect x="153.5" y="162.5" width="2" height="7" fill="#fff" stroke="#2a2aff" stroke-width="1"/><rect x="159" y="154" width="1" height="9" fill="#2a2aff"/><rect x="158.5" y="154.5" width="2" height="7" fill="#fff" stroke="#2a2aff" stroke-width="1"/><rect x="165" y="141" width="1" height="15" fill="#2a2aff"/><rect x="164.5" y="145.5" width="2" height="10" fill="#fff" stroke="#2a2aff" stroke-width="1"/><rect x="171" y="137" width="1" height="15" fill="#2a2aff"/><rect x="170" y="142" width="3" height="9" fill="#2a2aff"/><rect x="177" y="149" width="1" height="17" fill="#2a2aff"/><rect x="176" y="149" width="3" height="16" fill="#2a2aff"/><rect x="182" y="162" width="1" height="8" fill="#2a2aff"/><rect x="181" y="166" width="3" height="2" fill="#2a2aff"/><rect x="188" y="166" width="1" height="30" fill="#2a2aff"/><rect x="187" y="171" width="3" height="25" fill="#2a2aff"/><rect x="194" y="196" width="1" height="13" fill="#2a2aff"/><rect x="193" y="197" width="3" height="6" fill="#2a2aff"/><rect x="199" y="192" width="1" height="13" fill="#2a2aff"/><rect x="198.5" y="195.5" width="2" height="9" fill="#fff" stroke="#2a2aff" stroke-width="1"/><rect x="205" y="180" width="1" height="15" fill="#2a2aff"/><rect x="204.5" y="182.5" width="2" height="10" fill="#fff" stroke="#2a2aff" stroke-width="1"/><rect x="211" y="177" width="1" height="10" fill="#2a2aff"/><rect x="210" y="180" width="3" height="5" fill="#2a2aff"/><rect x="216" y="162" width="1" height="25" fill="#2a2aff"/><rect x="215.5" y="167.5" width="2" height="19" fill="#fff" stroke="#2a2aff" stroke-width="1"/><rect x="222" y="160" width="1" height="10" fill="#2a2aff"/><rect x="221" y="164" width="3" height="1" fill="#2a2aff"/><rect x="228" y="152" width="1" height="12" fill="#2a2aff"/><rect x="227.5" y="158.5" width="2" height="5" fill="#fff" stroke="#2a2aff" stroke-width="1"/><rect x="234" y="154" width="1" height="10" fill="#2a2aff"/><rect x="233.5" y="158.5" width="2" height="2" fill="#fff" stroke="#2a2aff" stroke-width="1"/><rect x="239" y="151" width="1" height="13" fill="#2a2aff"/><rect x="238" y="158" width="3" height="6" fill="#2a2aff"/><rect x="245" y="141" width="1" height="22" fill="#2a2aff"/><rect x="244.5" y="144.5" width="2" height="13" fill="#fff" stroke="#2a2aff" stroke-width="1"/><rect x="251" y="133" width="1" height="16" fill="#2a2aff"/><rect x="250.5" y="134.5" width="2" height="9" fill="#fff" stroke="#2a2aff" stroke-width="1"/><rect x="256" y="130" width="1" height="8" fill="#2a2aff"/><rect x="255" y="134" width="3" height="4" fill="#2a2aff"/><rect x="262" y="129" width="1" height="9" fill="#2a2aff"/><rect x="261.5" y="131.5" width="2" height="5" fill="#fff" stroke="#2a2aff" stroke-width="1"/><rect x="268" y="127" width="1" height="11" fill="#2a2aff"/><rect x="267" y="132" width="3" height="3" fill="#2a2aff"/><rect x="273" y="127" width="1" height="13" fill="#2a2aff"/><rect x="272.5" y="129.5" width="2" height="8" fill="#fff" stroke="#2a2aff" stroke-width="1"/><rect x="279" y="127" width="1" height="13" fill="#2a2aff"/><rect x="278" y="128" width="3" height="10" fill="#2a2aff"/><rect x="285" y="131" width="1" height="11" fill="#2a2aff"/><rect x="284.5" y="135.5" width="2" height="2" fill="#fff" stroke="#2a2aff" stroke-width="1"/><rect x="291" y="124" width="1" height="14" fill="#2a2aff"/><rect x="290.5" y="125.5" width="2" height="12" fill="#fff" stroke="#2a2aff" stroke-width="1"/><rect x="296" y="118" width="1" height="9" fill="#2a2aff"/><rect x="295" y="124" width="3" height="2" fill="#2a2aff"/><rect x="302" y="121" width="1" height="17" fill="#2a2aff"/><rect x="301.5" y="123.5" width="2" height="14" fill="#fff" stroke="#2a2aff" stroke-width="1"/><rect x="308" y="116" width="1" height="12" fill="#2a2aff"/><rect x="307" y="122" width="3" height="6" fill="#2a2aff"/><rect x="313" y="117" width="1" height="13" fill="#2a2aff"/><rect x="312.5" y="117.5" width="2" height="7" fill="#fff" stroke="#2a2aff" stroke-width="1"/><rect x="319" y="115" width="1" height="8" fill="#2a2aff"/><rect x="318.5" y="116.5" width="2" height="2" fill="#fff" stroke="#2a2aff" stroke-width="1"/><rect x="325" y="112" width="1" height="13" fill="#2a2aff"/><rect x="324" y="116" width="3" height="9" fill="#2a2aff"/><rect x="330" y="120" width="1" height="12" fill="#2a2aff"/><rect x="329" y="122" width="3" height="10" fill="#2a2aff"/><rect x="336" y="130" width="1" height="10" fill="#2a2aff"/><rect x="335" y="132" width="3" height="8" fill="#2a2aff"/><rect x="342" y="132" width="1" height="14" fill="#2a2aff"/><rect x="341" y="137" width="3" height="1" fill="#2a2aff"/><rect x="348" y="130" width="1" height="10" fill="#2a2aff"/><rect x="347" y="133" width="3" height="1" fill="#2a2aff"/><rect x="353" y="126" width="1" height="12" fill="#2a2aff"/><rect x="352" y="131" width="3" height="7" fill="#2a2aff"/><rect x="359" y="134" width="1" height="8" fill="#2a2aff"/><rect x="358" y="136" width="3" height="4" fill="#2a2aff"/><rect x="365" y="139" width="1" height="12" fill="#2a2aff"/><rect x="364" y="139" width="3" height="10" fill="#2a2aff"/><rect x="370" y="136" width="1" height="15" fill="#2a2aff"/><rect x="369.5" y="137.5" width="2" height="12" fill="#fff" stroke="#2a2aff" stroke-width="1"/><rect x="376" y="130" width="1" height="14" fill="#2a2aff"/><rect x="375" y="135" width="3" height="2" fill="#2a2aff"/><rect x="382" y="134" width="1" height="24" fill="#2a2aff"/><rect x="381" y="140" width="3" height="18" fill="#2a2aff"/><rect x="387" y="153" width="1" height="14" fill="#2a2aff"/><rect x="386" y="156" width="3" height="5" fill="#2a2aff"/><rect x="393" y="158" width="1" height="17" fill="#2a2aff"/><rect x="392" y="162" width="3" height="10" fill="#2a2aff"/><rect x="399" y="161" width="1" height="12" fill="#2a2aff"/><rect x="398" y="166" width="3" height="2" fill="#2a2aff"/><rect x="405" y="159" width="1" height="21" fill="#2a2aff"/><rect x="404.5" y="160.5" width="2" height="6" fill="#fff" stroke="#2a2aff" stroke-width="1"/><rect x="410" y="157" width="1" height="21" fill="#2a2aff"/><rect x="409" y="160" width="3" height="12" fill="#2a2aff"/><rect x="416" y="166" width="1" height="20" fill="#2a2aff"/><rect x="415" y="169" width="3" height="15" fill="#2a2aff"/><rect x="422" y="181" width="1" height="13" fill="#2a2aff"/><rect x="421" y="184" width="3" height="10" fill="#2a2aff"/><rect x="427" y="173" width="1" height="17" fill="#2a2aff"/><rect x="426.5" y="175.5" width="2" height="14" fill="#fff" stroke="#2a2aff" stroke-width="1"/><rect x="433" y="165" width="1" height="21" fill="#2a2aff"/><rect x="432" y="168" width="3" height="18" fill="#2a2aff"/><rect x="439" y="177" width="1" height="34" fill="#2a2aff"/><rect x="438" y="181" width="3" height="28" fill="#2a2aff"/><rect x="444" y="200" width="1" height="24" fill="#2a2aff"/><rect x="443" y="202" width="3" height="12" fill="#2a2aff"/><rect x="450" y="199" width="1" height="20" fill="#2a2aff"/><rect x="449.5" y="203.5" width="2" height="7" fill="#fff" stroke="#2a2aff" stroke-width="1"/><rect x="456" y="191" width="1" height="25" fill="#2a2aff"/><rect x="455.5" y="195.5" width="2" height="19" fill="#fff" stroke="#2a2aff" stroke-width="1"/><rect x="462" y="186" width="1" height="15" fill="#2a2aff"/><rect x="461.5" y="188.5" width="2" height="5" fill="#fff" stroke="#2a2aff" stroke-width="1"/><rect x="467" y="182" width="1" height="8" fill="#2a2aff"/><rect x="466.5" y="184.5" width="2" height="5" fill="#fff" stroke="#2a2aff" stroke-width="1"/><rect x="473" y="160" width="1" height="26" fill="#2a2aff"/><rect x="472.5" y="161.5" width="2" height="24" fill="#fff" stroke="#2a2aff" stroke-width="1"/><rect x="479" y="161" width="1" height="15" fill="#2a2aff"/><rect x="478" y="164" width="3" height="12" fill="#2a2aff"/><rect x="484" y="168" width="1" height="16" fill="#2a2aff"/><rect x="483" y="172" width="3" height="12" fill="#2a2aff"/><rect x="490" y="168" width="1" height="16" fill="#2a2aff"/><rect x="489.5" y="172.5" width="2" height="9" fill="#fff" stroke="#2a2aff" stroke-width="1"/><rect x="496" y="172" width="1" height="20" fill="#2a2aff"/><rect x="495" y="173" width="3" height="11" fill="#2a2aff"/><rect x="501" y="182" width="1" height="20" fill="#2a2aff"/><rect x="500" y="184" width="3" height="18" fill="#2a2aff"/><rect x="507" y="195" width="1" height="16" fill="#2a2aff"/><rect x="506" y="201" width="3" height="5" fill="#2a2aff"/><rect x="513" y="196" width="1" height="23" fill="#2a2aff"/><rect x="512" y="206" width="3" height="10" fill="#2a2aff"/><rect x="519" y="201" width="1" height="17" fill="#2a2aff"/><rect x="518.5" y="205.5" width="2" height="11" fill="#fff" stroke="#2a2aff" stroke-width="1"/><rect x="524" y="187" width="1" height="19" fill="#2a2aff"/><rect x="523.5" y="189.5" width="2" height="16" fill="#fff" stroke="#2a2aff" stroke-width="1"/><rect x="530" y="167" width="1" height="19" fill="#2a2aff"/><rect x="529.5" y="168.5" width="2" height="17" fill="#fff" stroke="#2a2aff" stroke-width="1"/><rect x="536" y="167" width="1" height="19" fill="#2a2aff"/><rect x="535" y="170" width="3" height="16" fill="#2a2aff"/><rect x="541" y="181" width="1" height="18" fill="#2a2aff"/><rect x="540" y="182" width="3" height="12" fill="#2a2aff"/><rect x="547" y="174" width="1" height="22" fill="#2a2aff"/><rect x="546.5" y="181.5" width="2" height="13" fill="#fff" stroke="#2a2aff" stroke-width="1"/><rect x="553" y="176" width="1" height="16" fill="#2a2aff"/><rect x="552" y="181" width="3" height="11" fill="#2a2aff"/><rect x="558" y="201" width="1" height="13" fill="#2a2aff"/><rect x="557" y="202" width="3" height="6" fill="#2a2aff"/><rect x="564" y="202" width="1" height="34" fill="#2a2aff"/><rect x="563" y="205" width="3" height="31" fill="#2a2aff"/><rect x="570" y="226" width="1" height="20" fill="#2a2aff"/><rect x="569" y="236" width="3" height="10" fill="#2a2aff"/><rect x="576" y="231" width="1" height="15" fill="#2a2aff"/><rect x="575" y="244" width="3" height="1" fill="#2a2aff"/><rect x="581" y="238" width="1" height="24" fill="#2a2aff"/><rect x="580" y="243" width="3" height="16" fill="#2a2aff"/><rect x="587" y="248" width="1" height="14" fill="#2a2aff"/><rect x="586" y="252" width="3" height="1" fill="#2a2aff"/><rect x="593" y="248" width="1" height="31" fill="#2a2aff"/><rect x="592" y="251" width="3" height="25" fill="#2a2aff"/><rect x="598" y="258" width="1" height="18" fill="#2a2aff"/><rect x="597.5" y="262.5" width="2" height="8" fill="#fff" stroke="#2a2aff" stroke-width="1"/><rect x="604" y="243" width="1" height="19" fill="#2a2aff"/><rect x="603.5" y="251.5" width="2" height="10" fill="#fff" stroke="#2a2aff" stroke-width="1"/><rect x="610" y="239" width="1" height="15" fill="#2a2aff"/><rect x="609" y="248" width="3" height="6" fill="#2a2aff"/><rect x="615" y="238" width="1" height="15" fill="#2a2aff"/><rect x="614.5" y="245.5" width="2" height="4" fill="#fff" stroke="#2a2aff" stroke-width="1"/><rect x="621" y="230" width="1" height="18" fill="#2a2aff"/><rect x="620.5" y="236.5" width="2" height="5" fill="#fff" stroke="#2a2aff" stroke-width="1"/><rect x="627" y="232" width="1" height="16" fill="#2a2aff"/><rect x="626" y="236" width="3" height="1" fill="#2a2aff"/><rect x="633" y="223" width="1" height="19" fill="#2a2aff"/><rect x="632.5" y="224.5" width="2" height="16" fill="#fff" stroke="#2a2aff" stroke-width="1"/><rect x="638" y="224" width="1" height="9" fill="#2a2aff"/><rect x="637" y="226" width="3" height="4" fill="#2a2aff"/><rect x="644" y="223" width="1" height="17" fill="#2a2aff"/><rect x="643" y="227" width="3" height="8" fill="#2a2aff"/><rect x="650" y="217" width="1" height="16" fill="#2a2aff"/><rect x="649.5" y="223.5" width="2" height="9" fill="#fff" stroke="#2a2aff" stroke-width="1"/><rect x="655" y="221" width="1" height="19" fill="#2a2aff"/><rect x="654" y="223" width="3" height="16" fill="#2a2aff"/><rect x="661" y="236" width="1" height="24" fill="#2a2aff"/><rect x="660" y="238" width="3" height="17" fill="#2a2aff"/><rect x="667" y="247" width="1" height="13" fill="#2a2aff"/><rect x="666.5" y="250.5" width="2" height="4" fill="#fff" stroke="#2a2aff" stroke-width="1"/><rect x="672" y="240" width="1" height="17" fill="#2a2aff"/><rect x="671" y="246" width="3" height="6" fill="#2a2aff"/><rect x="678" y="220" width="1" height="48" fill="#2a2aff"/><rect x="677.5" y="237.5" width="2" height="14" fill="#fff" stroke="#2a2aff" stroke-width="1"/><rect x="684" y="214" width="1" height="21" fill="#2a2aff"/><rect x="683.5" y="229.5" width="2" height="5" fill="#fff" stroke="#2a2aff" stroke-width="1"/><rect x="690" y="198" width="1" height="31" fill="#2a2aff"/><rect x="689.5" y="201.5" width="2" height="27" fill="#fff" stroke="#2a2aff" stroke-width="1"/><rect x="695" y="187" width="1" height="15" fill="#2a2aff"/><rect x="694.5" y="198.5" width="2" height="2" fill="#fff" stroke="#2a2aff" stroke-width="1"/><rect x="701" y="171" width="1" height="33" fill="#2a2aff"/><rect x="700.5" y="173.5" width="2" height="24" fill="#fff" stroke="#2a2aff" stroke-width="1"/><rect x="707" y="171" width="1" height="40" fill="#2a2aff"/><rect x="706" y="172" width="3" height="34" fill="#2a2aff"/><rect x="712" y="198" width="1" height="24" fill="#2a2aff"/><rect x="711" y="203" width="3" height="7" fill="#2a2aff"/><rect x="718" y="183" width="1" height="26" fill="#2a2aff"/><rect x="717.5" y="186.5" width="2" height="22" fill="#fff" stroke="#2a2aff" stroke-width="1"/><rect x="724" y="185" width="1" height="13" fill="#2a2aff"/><rect x="723" y="188" width="3" height="1" fill="#2a2aff"/><rect x="729" y="193" width="1" height="31" fill="#2a2aff"/><rect x="728" y="193" width="3" height="10" fill="#2a2aff"/><rect x="735" y="219" width="1" height="20" fill="#2a2aff"/><rect x="734" y="222" width="3" height="10" fill="#2a2aff"/><rect x="741" y="225" width="1" height="13" fill="#2a2aff"/><rect x="740" y="227" width="3" height="5" fill="#2a2aff"/><rect x="747" y="225" width="1" height="14" fill="#2a2aff"/><rect x="746" y="229" width="3" height="1" fill="#2a2aff"/><rect x="752" y="225" width="1" height="21" fill="#2a2aff"/><rect x="751" y="228" width="3" height="14" fill="#2a2aff"/><rect x="758" y="228" width="1" height="14" fill="#2a2aff"/><rect x="757.5" y="230.5" width="2" height="11" fill="#fff" stroke="#2a2aff" stroke-width="1"/><rect x="764" y="213" width="1" height="24" fill="#2a2aff"/><rect x="763.5" y="215.5" width="2" height="15" fill="#fff" stroke="#2a2aff" stroke-width="1"/><rect x="769" y="215" width="1" height="13" fill="#2a2aff"/><rect x="768" y="218" width="3" height="8" fill="#2a2aff"/><rect x="775" y="211" width="1" height="22" fill="#2a2aff"/><rect x="774" y="221" width="3" height="10" fill="#2a2aff"/><rect x="781" y="214" width="1" height="17" fill="#2a2aff"/><rect x="780.5" y="215.5" width="2" height="12" fill="#fff" stroke="#2a2aff" stroke-width="1"/><rect x="786" y="239" width="1" height="17" fill="#2a2aff"/><rect x="785" y="244" width="3" height="12" fill="#2a2aff"/><rect x="792" y="245" width="1" height="15" fill="#2a2aff"/><rect x="791" y="250" width="3" height="8" fill="#2a2aff"/><rect x="798" y="242" width="1" height="16" fill="#2a2aff"/><rect x="797.5" y="245.5" width="2" height="12" fill="#fff" stroke="#2a2aff" stroke-width="1"/><rect x="804" y="239" width="1" height="10" fill="#2a2aff"/><rect x="803.5" y="240.5" width="2" height="3" fill="#fff" stroke="#2a2aff" stroke-width="1"/><rect x="809" y="225" width="1" height="17" fill="#2a2aff"/><rect x="808" y="232" width="3" height="10" fill="#2a2aff"/><rect x="815" y="222" width="1" height="12" fill="#2a2aff"/><rect x="814.5" y="224.5" width="2" height="9" fill="#fff" stroke="#2a2aff" stroke-width="1"/><rect x="821" y="213" width="1" height="12" fill="#2a2aff"/><rect x="820.5" y="220.5" width="2" height="4" fill="#fff" stroke="#2a2aff" stroke-width="1"/><rect x="826" y="216" width="1" height="23" fill="#2a2aff"/><rect x="825" y="222" width="3" height="4" fill="#2a2aff"/><rect x="832" y="215" width="1" height="18" fill="#2a2aff"/><rect x="831.5" y="219.5" width="2" height="5" fill="#fff" stroke="#2a2aff" stroke-width="1"/><rect x="838" y="219" width="1" height="19" fill="#2a2aff"/><rect x="837" y="219" width="3" height="16" fill="#2a2aff"/><rect x="843" y="232" width="1" height="21" fill="#2a2aff"/><rect x="842" y="234" width="3" height="19" fill="#2a2aff"/><rect x="849" y="243" width="1" height="11" fill="#2a2aff"/><rect x="848" y="251" width="3" height="1" fill="#2a2aff"/><rect x="855" y="246" width="1" height="14" fill="#2a2aff"/><rect x="854.5" y="248.5" width="2" height="4" fill="#fff" stroke="#2a2aff" stroke-width="1"/><rect x="861" y="240" width="1" height="12" fill="#2a2aff"/><rect x="860.5" y="246.5" width="2" height="2" fill="#fff" stroke="#2a2aff" stroke-width="1"/><rect x="866" y="247" width="1" height="13" fill="#2a2aff"/><rect x="865" y="248" width="3" height="12" fill="#2a2aff"/><rect x="872" y="237" width="1" height="24" fill="#2a2aff"/><rect x="871.5" y="239.5" width="2" height="21" fill="#fff" stroke="#2a2aff" stroke-width="1"/><rect x="878" y="234" width="1" height="11" fill="#2a2aff"/><rect x="877" y="240" width="3" height="1" fill="#2a2aff"/><rect x="883" y="233" width="1" height="11" fill="#2a2aff"/><rect x="882" y="238" width="3" height="6" fill="#2a2aff"/><rect x="889" y="229" width="1" height="13" fill="#2a2aff"/><rect x="888.5" y="231.5" width="2" height="10" fill="#fff" stroke="#2a2aff" stroke-width="1"/><rect x="895" y="221" width="1" height="17" fill="#2a2aff"/><rect x="894.5" y="223.5" width="2" height="6" fill="#fff" stroke="#2a2aff" stroke-width="1"/><rect x="900" y="221" width="1" height="22" fill="#2a2aff"/><rect x="899" y="221" width="3" height="21" fill="#2a2aff"/><rect x="906" y="230" width="1" height="19" fill="#2a2aff"/><rect x="905" y="243" width="3" height="1" fill="#2a2aff"/><rect x="912" y="239" width="1" height="9" fill="#2a2aff"/><rect x="911" y="243" width="3" height="1" fill="#2a2aff"/><rect x="918" y="237" width="1" height="10" fill="#2a2aff"/><rect x="917.5" y="239.5" width="2" height="3" fill="#fff" stroke="#2a2aff" stroke-width="1"/><rect x="923" y="237" width="1" height="8" fill="#2a2aff"/><rect x="922" y="241" width="3" height="1" fill="#2a2aff"/><rect x="929" y="243" width="1" height="11" fill="#2a2aff"/><rect x="928" y="250" width="3" height="3" fill="#2a2aff"/><rect x="935" y="234" width="1" height="19" fill="#2a2aff"/><rect x="934.5" y="236.5" width="2" height="15" fill="#fff" stroke="#2a2aff" stroke-width="1"/><rect x="940" y="231" width="1" height="17" fill="#2a2aff"/><rect x="939" y="236" width="3" height="12" fill="#2a2aff"/><rect x="946" y="243" width="1" height="8" fill="#2a2aff"/><rect x="945" y="246" width="3" height="4" fill="#2a2aff"/><rect x="952" y="249" width="1" height="11" fill="#2a2aff"/><rect x="951" y="249" width="3" height="10" fill="#2a2aff"/><rect x="957" y="246" width="1" height="14" fill="#2a2aff"/><rect x="956.5" y="249.5" width="2" height="10" fill="#fff" stroke="#2a2aff" stroke-width="1"/><rect x="963" y="245" width="1" height="8" fill="#2a2aff"/><rect x="962.5" y="249.5" width="2" height="2" fill="#fff" stroke="#2a2aff" stroke-width="1"/><rect x="969" y="236" width="1" height="13" fill="#2a2aff"/><rect x="968.5" y="237.5" width="2" height="11" fill="#fff" stroke="#2a2aff" stroke-width="1"/><rect x="975" y="232" width="1" height="14" fill="#2a2aff"/><rect x="974" y="236" width="3" height="2" fill="#2a2aff"/><rect x="980" y="228" width="1" height="11" fill="#2a2aff"/><rect x="979.5" y="228.5" width="2" height="10" fill="#fff" stroke="#2a2aff" stroke-width="1"/><rect x="986" y="228" width="1" height="7" fill="#2a2aff"/><rect x="985" y="228" width="3" height="6" fill="#2a2aff"/><rect x="992" y="231" width="1" height="15" fill="#2a2aff"/><rect x="991" y="234" width="3" height="7" fill="#2a2aff"/><rect x="997" y="231" width="1" height="11" fill="#2a2aff"/><rect x="996" y="238" width="3" height="1" fill="#2a2aff"/><rect x="1003" y="234" width="1" height="12" fill="#2a2aff"/><rect x="1002" y="241" width="3" height="1" fill="#2a2aff"/><rect x="1009" y="240" width="1" height="10" fill="#2a2aff"/><rect x="1008.5" y="242.5" width="2" height="3" fill="#fff" stroke="#2a2aff" stroke-width="1"/><rect x="1014" y="238" width="1" height="12" fill="#2a2aff"/><rect x="1013" y="243" width="3" height="3" fill="#2a2aff"/><rect x="1020" y="236" width="1" height="6" fill="#2a2aff"/><rect x="1019.5" y="237.5" width="2" height="4" fill="#fff" stroke="#2a2aff" stroke-width="1"/><rect x="1026" y="231" width="1" height="10" fill="#2a2aff"/><rect x="1025" y="236" width="3" height="4" fill="#2a2aff"/><rect x="1032" y="230" width="1" height="11" fill="#2a2aff"/><rect x="1031.5" y="231.5" width="2" height="8" fill="#fff" stroke="#2a2aff" stroke-width="1"/><rect x="1037" y="228" width="1" height="8" fill="#2a2aff"/><rect x="1036.5" y="230.5" width="2" height="4" fill="#fff" stroke="#2a2aff" stroke-width="1"/><rect x="1043" y="225" width="1" height="8" fill="#2a2aff"/><rect x="1042.5" y="227.5" width="2" height="4" fill="#fff" stroke="#2a2aff" stroke-width="1"/><rect x="1049" y="211" width="1" height="15" fill="#2a2aff"/><rect x="1048.5" y="216.5" width="2" height="9" fill="#fff" stroke="#2a2aff" stroke-width="1"/><rect x="1054" y="209" width="1" height="9" fill="#2a2aff"/><rect x="1053.5" y="211.5" width="2" height="4" fill="#fff" stroke="#2a2aff" stroke-width="1"/><rect x="1060" y="202" width="1" height="13" fill="#2a2aff"/><rect x="1059" y="211" width="3" height="3" fill="#2a2aff"/><rect x="1066" y="204" width="1" height="11" fill="#2a2aff"/><rect x="1065.5" y="206.5" width="2" height="8" fill="#fff" stroke="#2a2aff" stroke-width="1"/><rect x="1071" y="199" width="1" height="15" fill="#2a2aff"/><rect x="1070" y="204" width="3" height="10" fill="#2a2aff"/><rect x="1077" y="204" width="1" height="13" fill="#2a2aff"/><rect x="1076.5" y="208.5" width="2" height="5" fill="#fff" stroke="#2a2aff" stroke-width="1"/><rect x="1083" y="174" width="1" height="32" fill="#2a2aff"/><rect x="1082.5" y="184.5" width="2" height="21" fill="#fff" stroke="#2a2aff" stroke-width="1"/><rect x="1089" y="166" width="1" height="18" fill="#2a2aff"/><rect x="1088.5" y="172.5" width="2" height="11" fill="#fff" stroke="#2a2aff" stroke-width="1"/><rect x="1094" y="172" width="1" height="9" fill="#2a2aff"/><rect x="1093" y="173" width="3" height="8" fill="#2a2aff"/><rect x="1100" y="159" width="1" height="25" fill="#2a2aff"/><rect x="1099.5" y="164.5" width="2" height="13" fill="#fff" stroke="#2a2aff" stroke-width="1"/><rect x="1106" y="159" width="1" height="17" fill="#2a2aff"/><rect x="1105" y="159" width="3" height="12" fill="#2a2aff"/><rect x="1111" y="164" width="1" height="12" fill="#2a2aff"/><rect x="1110" y="168" width="3" height="7" fill="#2a2aff"/><rect x="1117" y="170" width="1" height="16" fill="#2a2aff"/><rect x="1116" y="172" width="3" height="7" fill="#2a2aff"/><rect x="1123" y="177" width="1" height="17" fill="#2a2aff"/><rect x="1122" y="183" width="3" height="5" fill="#2a2aff"/><rect x="1128" y="183" width="1" height="8" fill="#2a2aff"/><rect x="1127" y="186" width="3" height="4" fill="#2a2aff"/><rect x="1134" y="184" width="1" height="15" fill="#2a2aff"/><rect x="1133" y="191" width="3" height="5" fill="#2a2aff"/><rect x="1140" y="191" width="1" height="11" fill="#2a2aff"/><rect x="1139.5" y="194.5" width="2" height="5" fill="#fff" stroke="#2a2aff" stroke-width="1"/><rect x="1146" y="189" width="1" height="23" fill="#2a2aff"/><rect x="1145" y="196" width="3" height="11" fill="#2a2aff"/><rect x="1151" y="198" width="1" height="10" fill="#2a2aff"/><rect x="1150.5" y="203.5" width="2" height="4" fill="#fff" stroke="#2a2aff" stroke-width="1"/><rect x="1157" y="201" width="1" height="11" fill="#2a2aff"/><rect x="1156" y="201" width="3" height="10" fill="#2a2aff"/><rect x="1163" y="201" width="1" height="15" fill="#2a2aff"/><rect x="1162" y="208" width="3" height="1" fill="#2a2aff"/><rect x="1168" y="202" width="1" height="8" fill="#2a2aff"/><rect x="1167" y="205" width="3" height="5" fill="#2a2aff"/><rect x="1174" y="204" width="1" height="20" fill="#2a2aff"/><rect x="1173" y="209" width="3" height="8" fill="#2a2aff"/><rect x="1180" y="210" width="1" height="22" fill="#2a2aff"/><rect x="1179.5" y="214.5" width="2" height="6" fill="#fff" stroke="#2a2aff" stroke-width="1"/><rect x="1185" y="214" width="1" height="14" fill="#2a2aff"/><rect x="1184" y="214" width="3" height="14" fill="#2a2aff"/><rect x="1191" y="221" width="1" height="11" fill="#2a2aff"/><rect x="1190" y="227" width="3" height="4" fill="#2a2aff"/><rect x="1197" y="224" width="1" height="7" fill="#2a2aff"/><rect x="1196.5" y="227.5" width="2" height="2" fill="#fff" stroke="#2a2aff" stroke-width="1"/><rect x="1203" y="215" width="1" height="13" fill="#2a2aff"/><rect x="1202.5" y="217.5" width="2" height="10" fill="#fff" stroke="#2a2aff" stroke-width="1"/><rect x="1208" y="204" width="1" height="12" fill="#2a2aff"/><rect x="1207.5" y="207.5" width="2" height="8" fill="#fff" stroke="#2a2aff" stroke-width="1"/><rect x="1214" y="208" width="1" height="16" fill="#2a2aff"/><rect x="1213" y="208" width="3" height="16" fill="#2a2aff"/><rect x="1220" y="221" width="1" height="11" fill="#2a2aff"/><rect x="1219" y="223" width="3" height="1" fill="#2a2aff"/><rect x="1225" y="217" width="1" height="11" fill="#2a2aff"/><rect x="1224" y="224" width="3" height="3" fill="#2a2aff"/><rect x="1231" y="221" width="1" height="9" fill="#2a2aff"/><rect x="1230.5" y="222.5" width="2" height="5" fill="#fff" stroke="#2a2aff" stroke-width="1"/><rect x="1237" y="215" width="1" height="9" fill="#2a2aff"/><rect x="1236.5" y="217.5" width="2" height="5" fill="#fff" stroke="#2a2aff" stroke-width="1"/><rect x="1242" y="208" width="1" height="9" fill="#2a2aff"/><rect x="1241.5" y="215.5" width="2" height="2" fill="#fff" stroke="#2a2aff" stroke-width="1"/><rect x="1248" y="206" width="1" height="11" fill="#2a2aff"/><rect x="1247.5" y="211.5" width="2" height="4" fill="#fff" stroke="#2a2aff" stroke-width="1"/><rect x="1254" y="208" width="1" height="22" fill="#2a2aff"/><rect x="1253" y="210" width="3" height="20" fill="#2a2aff"/><rect x="1260" y="226" width="1" height="5" fill="#2a2aff"/><rect x="1259.5" y="226.5" width="2" height="4" fill="#fff" stroke="#2a2aff" stroke-width="1"/><rect x="1265" y="223" width="1" height="20" fill="#2a2aff"/><rect x="1264" y="226" width="3" height="16" fill="#2a2aff"/><rect x="1271" y="239" width="1" height="7" fill="#2a2aff"/><rect x="1270" y="240" width="3" height="6" fill="#2a2aff"/><rect x="1277" y="231" width="1" height="14" fill="#2a2aff"/><rect x="1276.5" y="233.5" width="2" height="11" fill="#fff" stroke="#2a2aff" stroke-width="1"/><rect x="1282" y="234" width="1" height="7" fill="#2a2aff"/><rect x="1281" y="235" width="3" height="5" fill="#2a2aff"/><rect x="1288" y="236" width="1" height="20" fill="#2a2aff"/><rect x="1287" y="241" width="3" height="15" fill="#2a2aff"/><rect x="1294" y="256" width="1" height="13" fill="#2a2aff"/><rect x="1293" y="257" width="3" height="2" fill="#2a2aff"/><rect x="1299" y="258" width="1" height="24" fill="#2a2aff"/><rect x="1298" y="259" width="3" height="18" fill="#2a2aff"/><rect x="1305" y="269" width="1" height="10" fill="#2a2aff"/><rect x="1304" y="272" width="3" height="1" fill="#2a2aff"/><rect x="1311" y="256" width="1" height="18" fill="#2a2aff"/><rect x="1310.5" y="265.5" width="2" height="7" fill="#fff" stroke="#2a2aff" stroke-width="1"/><rect x="1317" y="260" width="1" height="15" fill="#2a2aff"/><rect x="1316" y="263" width="3" height="12" fill="#2a2aff"/><rect x="1322" y="264" width="1" height="15" fill="#2a2aff"/><rect x="1321.5" y="271.5" width="2" height="5" fill="#fff" stroke="#2a2aff" stroke-width="1"/><rect x="1328" y="258" width="1" height="13" fill="#2a2aff"/><rect x="1327.5" y="259.5" width="2" height="8" fill="#fff" stroke="#2a2aff" stroke-width="1"/><rect x="1334" y="257" width="1" height="13" fill="#2a2aff"/><rect x="1333" y="259" width="3" height="10" fill="#2a2aff"/><rect x="1339" y="261" width="1" height="7" fill="#2a2aff"/><rect x="1338.5" y="263.5" width="2" height="2" fill="#fff" stroke="#2a2aff" stroke-width="1"/><rect x="1345" y="252" width="1" height="11" fill="#2a2aff"/><rect x="1344.5" y="258.5" width="2" height="4" fill="#fff" stroke="#2a2aff" stroke-width="1"/><rect x="1351" y="249" width="1" height="15" fill="#2a2aff"/><rect x="1350" y="260" width="3" height="4" fill="#2a2aff"/><rect x="1356" y="257" width="1" height="12" fill="#2a2aff"/><rect x="1355.5" y="261.5" width="2" height="2" fill="#fff" stroke="#2a2aff" stroke-width="1"/><rect x="1362" y="248" width="1" height="15" fill="#2a2aff"/><rect x="1361.5" y="250.5" width="2" height="8" fill="#fff" stroke="#2a2aff" stroke-width="1"/><rect x="1368" y="246" width="1" height="8" fill="#2a2aff"/><rect x="1367.5" y="247.5" width="2" height="2" fill="#fff" stroke="#2a2aff" stroke-width="1"/><rect x="1374" y="240" width="1" height="12" fill="#2a2aff"/><rect x="1373.5" y="242.5" width="2" height="5" fill="#fff" stroke="#2a2aff" stroke-width="1"/><rect x="1379" y="237" width="1" height="8" fill="#2a2aff"/><rect x="1378" y="241" width="3" height="1" fill="#2a2aff"/><rect x="1385" y="231" width="1" height="9" fill="#2a2aff"/><rect x="1384.5" y="235.5" width="2" height="4" fill="#fff" stroke="#2a2aff" stroke-width="1"/><rect x="1391" y="232" width="1" height="8" fill="#2a2aff"/><rect x="1390" y="233" width="3" height="1" fill="#2a2aff"/><rect x="1396" y="232" width="1" height="8" fill="#2a2aff"/><rect x="1395" y="233" width="3" height="3" fill="#2a2aff"/><rect x="1402" y="226" width="1" height="14" fill="#2a2aff"/><rect x="1401.5" y="226.5" width="2" height="8" fill="#fff" stroke="#2a2aff" stroke-width="1"/><rect x="1408" y="222" width="1" height="8" fill="#2a2aff"/><rect x="1407" y="227" width="3" height="3" fill="#2a2aff"/><rect x="1413" y="220" width="1" height="21" fill="#2a2aff"/><rect x="1412.5" y="225.5" width="2" height="2" fill="#fff" stroke="#2a2aff" stroke-width="1"/><rect x="1419" y="238" width="1" height="34" fill="#2a2aff"/><rect x="1418" y="244" width="3" height="23" fill="#2a2aff"/><rect x="1425" y="268" width="1" height="50" fill="#2a2aff"/><rect x="1424" y="268" width="3" height="39" fill="#2a2aff"/><rect x="1431" y="290" width="1" height="43" fill="#2a2aff"/><rect x="1430" y="312" width="3" height="6" fill="#2a2aff"/><rect x="1436" y="309" width="1" height="33" fill="#2a2aff"/><rect x="1435" y="315" width="3" height="16" fill="#2a2aff"/><rect x="1442" y="302" width="1" height="66" fill="#2a2aff"/><rect x="1441.5" y="307.5" width="2" height="37" fill="#fff" stroke="#2a2aff" stroke-width="1"/><rect x="1448" y="302" width="1" height="35" fill="#2a2aff"/><rect x="1447" y="303" width="3" height="23" fill="#2a2aff"/><rect x="1453" y="310" width="1" height="20" fill="#2a2aff"/><rect x="1452.5" y="313.5" width="2" height="14" fill="#fff" stroke="#2a2aff" stroke-width="1"/><rect x="1459" y="303" width="1" height="17" fill="#2a2aff"/><rect x="1458" y="311" width="3" height="1" fill="#2a2aff"/><rect x="1465" y="308" width="1" height="9" fill="#2a2aff"/><rect x="1464" y="311" width="3" height="4" fill="#2a2aff"/><rect x="1470" y="300" width="1" height="22" fill="#2a2aff"/><rect x="1469.5" y="304.5" width="2" height="9" fill="#fff" stroke="#2a2aff" stroke-width="1"/><rect x="1476" y="284" width="1" height="19" fill="#2a2aff"/><rect x="1475.5" y="284.5" width="2" height="16" fill="#fff" stroke="#2a2aff" stroke-width="1"/><rect x="1482" y="287" width="1" height="18" fill="#2a2aff"/><rect x="1481" y="289" width="3" height="12" fill="#2a2aff"/><rect x="1488" y="285" width="1" height="13" fill="#2a2aff"/><rect x="1487.5" y="290.5" width="2" height="6" fill="#fff" stroke="#2a2aff" stroke-width="1"/><rect x="1493" y="279" width="1" height="30" fill="#2a2aff"/><rect x="1492" y="285" width="3" height="17" fill="#2a2aff"/><rect x="1499" y="294" width="1" height="9" fill="#2a2aff"/><rect x="1498.5" y="298.5" width="2" height="3" fill="#fff" stroke="#2a2aff" stroke-width="1"/><rect x="1505" y="292" width="1" height="13" fill="#2a2aff"/><rect x="1504.5" y="295.5" width="2" height="2" fill="#fff" stroke="#2a2aff" stroke-width="1"/><rect x="1510" y="289" width="1" height="20" fill="#2a2aff"/><rect x="1509" y="292" width="3" height="12" fill="#2a2aff"/><rect x="1516" y="304" width="1" height="16" fill="#2a2aff"/><rect x="1515" y="304" width="3" height="14" fill="#2a2aff"/><rect x="1522" y="317" width="1" height="12" fill="#2a2aff"/><rect x="1521" y="319" width="3" height="9" fill="#2a2aff"/><rect x="1527" y="334" width="1" height="27" fill="#2a2aff"/><rect x="1526" y="336" width="3" height="8" fill="#2a2aff"/><rect x="1533" y="332" width="1" height="17" fill="#2a2aff"/><rect x="1532" y="339" width="3" height="5" fill="#2a2aff"/><rect x="1539" y="348" width="1" height="20" fill="#2a2aff"/><rect x="1538" y="353" width="3" height="7" fill="#2a2aff"/><rect x="1545" y="330" width="1" height="22" fill="#2a2aff"/><rect x="1544.5" y="336.5" width="2" height="15" fill="#fff" stroke="#2a2aff" stroke-width="1"/><rect x="1550" y="326" width="1" height="20" fill="#2a2aff"/><rect x="1549" y="333" width="3" height="13" fill="#2a2aff"/><rect x="1556" y="325" width="1" height="21" fill="#2a2aff"/><rect x="1555.5" y="330.5" width="2" height="15" fill="#fff" stroke="#2a2aff" stroke-width="1"/><rect x="1562" y="317" width="1" height="12" fill="#2a2aff"/><rect x="1561.5" y="322.5" width="2" height="6" fill="#fff" stroke="#2a2aff" stroke-width="1"/><rect x="1567" y="299" width="1" height="21" fill="#2a2aff"/><rect x="1566.5" y="312.5" width="2" height="7" fill="#fff" stroke="#2a2aff" stroke-width="1"/><rect x="1573" y="295" width="1" height="18" fill="#2a2aff"/><rect x="1572.5" y="297.5" width="2" height="15" fill="#fff" stroke="#2a2aff" stroke-width="1"/><rect x="1579" y="297" width="1" height="7" fill="#2a2aff"/><rect x="1578" y="298" width="3" height="4" fill="#2a2aff"/><rect x="1584" y="307" width="1" height="17" fill="#2a2aff"/><rect x="1583" y="307" width="3" height="8" fill="#2a2aff"/><rect x="1590" y="306" width="1" height="11" fill="#2a2aff"/><rect x="1589.5" y="309.5" width="2" height="4" fill="#fff" stroke="#2a2aff" stroke-width="1"/><rect x="1596" y="302" width="1" height="14" fill="#2a2aff"/><rect x="1595" y="306" width="3" height="1" fill="#2a2aff"/><rect x="1602" y="302" width="1" height="10" fill="#2a2aff"/><rect x="1601" y="306" width="3" height="3" fill="#2a2aff"/><rect x="1607" y="297" width="1" height="17" fill="#2a2aff"/><rect x="1606" y="300" width="3" height="14" fill="#2a2aff"/><rect x="1613" y="312" width="1" height="11" fill="#2a2aff"/><rect x="1612" y="314" width="3" height="3" fill="#2a2aff"/><rect x="1619" y="309" width="1" height="17" fill="#2a2aff"/><rect x="1618.5" y="313.5" width="2" height="6" fill="#fff" stroke="#2a2aff" stroke-width="1"/><rect x="1624" y="308" width="1" height="6" fill="#2a2aff"/><rect x="1623" y="311" width="3" height="3" fill="#2a2aff"/><rect x="1630" y="310" width="1" height="13" fill="#2a2aff"/><rect x="1629" y="313" width="3" height="7" fill="#2a2aff"/><rect x="1636" y="306" width="1" height="13" fill="#2a2aff"/><rect x="1635.5" y="313.5" width="2" height="2" fill="#fff" stroke="#2a2aff" stroke-width="1"/><rect x="1641" y="301" width="1" height="21" fill="#2a2aff"/><rect x="1640" y="312" width="3" height="7" fill="#2a2aff"/><rect x="1647" y="314" width="1" height="9" fill="#2a2aff"/><rect x="1646" y="319" width="3" height="3" fill="#2a2aff"/><rect x="1653" y="304" width="1" height="23" fill="#2a2aff"/><rect x="1652.5" y="314.5" width="2" height="12" fill="#fff" stroke="#2a2aff" stroke-width="1"/><rect x="1659" y="303" width="1" height="11" fill="#2a2aff"/><rect x="1658.5" y="306.5" width="2" height="3" fill="#fff" stroke="#2a2aff" stroke-width="1"/><rect x="1664" y="303" width="1" height="13" fill="#2a2aff"/><rect x="1663" y="307" width="3" height="6" fill="#2a2aff"/><rect x="1670" y="304" width="1" height="10" fill="#2a2aff"/><rect x="1669.5" y="308.5" width="2" height="5" fill="#fff" stroke="#2a2aff" stroke-width="1"/><rect x="1676" y="297" width="1" height="15" fill="#2a2aff"/><rect x="1675.5" y="298.5" width="2" height="10" fill="#fff" stroke="#2a2aff" stroke-width="1"/><rect x="1681" y="292" width="1" height="10" fill="#2a2aff"/><rect x="1680.5" y="293.5" width="2" height="4" fill="#fff" stroke="#2a2aff" stroke-width="1"/><rect x="1687" y="285" width="1" height="13" fill="#2a2aff"/><rect x="1686" y="294" width="3" height="2" fill="#2a2aff"/><rect x="1693" y="260" width="1" height="38" fill="#2a2aff"/><rect x="1692.5" y="270.5" width="2" height="27" fill="#fff" stroke="#2a2aff" stroke-width="1"/><rect x="1698" y="264" width="1" height="18" fill="#2a2aff"/><rect x="1697" y="266" width="3" height="8" fill="#2a2aff"/><rect x="1704" y="194" width="1" height="70" fill="#2a2aff"/><rect x="1703.5" y="231.5" width="2" height="32" fill="#fff" stroke="#2a2aff" stroke-width="1"/><rect x="1710" y="195" width="1" height="68" fill="#2a2aff"/><rect x="1709" y="195" width="3" height="45" fill="#2a2aff"/><rect x="1716" y="204" width="1" height="40" fill="#2a2aff"/><rect x="1715.5" y="212.5" width="2" height="19" fill="#fff" stroke="#2a2aff" stroke-width="1"/><rect x="1721" y="203" width="1" height="26" fill="#2a2aff"/><rect x="1720" y="208" width="3" height="1" fill="#2a2aff"/><rect x="1727" y="189" width="1" height="29" fill="#2a2aff"/><rect x="1726.5" y="191.5" width="2" height="20" fill="#fff" stroke="#2a2aff" stroke-width="1"/><rect x="1733" y="201" width="1" height="19" fill="#2a2aff"/><rect x="1732" y="202" width="3" height="6" fill="#2a2aff"/><rect x="1738" y="169" width="1" height="103" fill="#2a2aff"/><rect x="1737" y="178" width="3" height="77" fill="#2a2aff"/><rect x="1744" y="266" width="1" height="28" fill="#2a2aff"/><rect x="1743" y="282" width="3" height="11" fill="#2a2aff"/><rect x="1750" y="278" width="1" height="13" fill="#2a2aff"/><rect x="1749.5" y="286.5" width="2" height="2" fill="#fff" stroke="#2a2aff" stroke-width="1"/><rect x="1755" y="276" width="1" height="14" fill="#2a2aff"/><rect x="1754" y="287" width="3" height="1" fill="#2a2aff"/><rect x="1761" y="282" width="1" height="10" fill="#2a2aff"/><rect x="1760" y="286" width="3" height="2" fill="#2a2aff"/><rect x="1767" y="284" width="1" height="9" fill="#2a2aff"/><rect x="1766" y="288" width="3" height="4" fill="#2a2aff"/><rect x="1773" y="289" width="1" height="9" fill="#2a2aff"/><rect x="1772" y="293" width="3" height="5" fill="#2a2aff"/><rect x="1778" y="275" width="1" height="18" fill="#2a2aff"/><rect x="1777.5" y="275.5" width="2" height="17" fill="#fff" stroke="#2a2aff" stroke-width="1"/><rect x="1784" y="275" width="1" height="7" fill="#2a2aff"/><rect x="1783" y="278" width="3" height="1" fill="#2a2aff"/><rect x="1790" y="277" width="1" height="10" fill="#2a2aff"/><rect x="1789" y="278" width="3" height="5" fill="#2a2aff"/><rect x="1795" y="268" width="1" height="24" fill="#2a2aff"/><rect x="1794.5" y="271.5" width="2" height="16" fill="#fff" stroke="#2a2aff" stroke-width="1"/><rect x="1801" y="262" width="1" height="14" fill="#2a2aff"/><rect x="1800.5" y="266.5" width="2" height="6" fill="#fff" stroke="#2a2aff" stroke-width="1"/><rect x="1807" y="261" width="1" height="10" fill="#2a2aff"/><rect x="1806.5" y="267.5" width="2" height="2" fill="#fff" stroke="#2a2aff" stroke-width="1"/><rect x="1812" y="263" width="1" height="17" fill="#2a2aff"/><rect x="1811" y="267" width="3" height="13" fill="#2a2aff"/><rect x="1818" y="261" width="1" height="19" fill="#2a2aff"/><rect x="1817.5" y="265.5" width="2" height="13" fill="#fff" stroke="#2a2aff" stroke-width="1"/><rect x="1824" y="254" width="1" height="22" fill="#2a2aff"/><rect x="1823" y="263" width="3" height="13" fill="#2a2aff"/><rect x="1830" y="273" width="1" height="7" fill="#2a2aff"/><rect x="1829" y="275" width="3" height="5" fill="#2a2aff"/><rect x="1835" y="276" width="1" height="12" fill="#2a2aff"/><rect x="1834" y="276" width="3" height="4" fill="#2a2aff"/><rect x="1841" y="271" width="1" height="12" fill="#2a2aff"/><rect x="1840.5" y="272.5" width="2" height="5" fill="#fff" stroke="#2a2aff" stroke-width="1"/><rect x="1847" y="261" width="1" height="14" fill="#2a2aff"/><rect x="1846" y="273" width="3" height="2" fill="#2a2aff"/><rect x="1852" y="271" width="1" height="10" fill="#2a2aff"/><rect x="1851" y="275" width="3" height="1" fill="#2a2aff"/><rect x="1858" y="275" width="1" height="9" fill="#2a2aff"/><rect x="1857" y="276" width="3" height="5" fill="#2a2aff"/></g><g clip-path="url(#cr)"><path d="M136.8,515.5 L142.5,517.0 L148.2,518.7 L153.9,519.8 L159.6,520.0 L165.3,520.4 L171.0,520.9 L176.7,522.7 L182.4,524.9 L188.1,527.1 L193.8,529.0 L199.5,528.8 L205.2,527.9 L210.9,526.9 L216.6,525.3 L222.3,523.4 L228.0,521.6 L233.7,520.1 L239.4,518.6 L245.1,516.6 L250.8,513.8 L256.5,511.8 L262.2,509.9 L267.9,508.8 L273.6,507.3 L279.3,506.0 L285.0,504.0 L290.7,501.4 L296.4,499.6 L302.1,498.3 L307.8,498.1 L313.5,496.9 L319.2,494.8 L324.9,493.4 L330.6,491.7 L336.3,490.4 L342.0,489.4 L347.7,488.9 L353.4,488.6 L359.1,489.4 L364.8,491.0 L370.5,491.8 L376.2,492.5 L381.9,494.1 L387.6,496.7 L393.3,499.9 L399.0,502.4 L404.7,504.5 L410.4,506.8 L416.1,509.8 L421.8,512.3 L427.5,513.6 L433.2,515.8 L438.9,518.6 L444.6,521.5 L450.3,523.4 L456.0,525.4 L461.7,527.0 L467.4,527.5 L473.1,526.5 L478.8,525.7 L484.5,525.5 L490.2,525.1 L495.9,524.9 L501.6,525.2 L507.3,525.0 L513.0,526.2 L518.7,526.8 L524.4,525.4 L530.1,523.2 L535.8,521.4 L541.5,520.3 L547.2,519.4 L552.9,518.3 L558.6,517.4 L564.3,516.9 L570.0,517.8 L575.7,518.3 L581.4,518.5 L587.1,518.2 L592.8,518.9 L598.5,519.5 L604.2,519.9 L609.9,520.6 L615.6,521.8 L621.3,521.9 L627.0,521.7 L632.7,521.4 L638.4,520.9 L644.1,520.1 L649.8,518.5 L655.5,517.5 L661.2,517.7 L666.9,518.5 L672.6,520.0 L678.3,520.0 L684.0,519.2 L689.7,518.1 L695.4,516.4 L701.1,513.8 L706.8,511.9 L712.5,510.1 L718.2,507.6 L723.9,505.0 L729.6,503.4 L735.3,502.2 L741.0,501.7 L746.7,501.6 L752.4,501.8 L758.1,501.9 L763.8,501.7 L769.5,502.0 L775.2,503.0 L780.9,503.0 L786.6,504.0 L792.3,505.7 L798.0,505.9 L803.7,505.3 L809.4,505.1 L815.1,504.0 L820.8,503.6 L826.5,503.9 L832.2,504.8 L837.9,506.5 L843.6,509.4 L849.3,510.6 L855.0,511.6 L860.7,513.0 L866.4,514.9 L872.1,515.0 L877.8,514.3 L883.5,513.8 L889.2,512.8 L894.9,511.1 L900.6,510.9 L906.3,511.4 L912.0,511.4 L917.7,511.1 L923.4,511.5 L929.1,511.4 L934.8,510.0 L940.5,509.9 L946.2,510.1 L951.9,510.7 L957.6,511.3 L963.3,512.1 L969.0,511.8 L974.7,511.9 L980.4,510.7 L986.1,509.3 L991.8,508.5 L997.5,507.7 L1003.2,507.3 L1008.9,506.4 L1014.6,506.9 L1020.3,506.6 L1026.0,506.3 L1031.7,506.0 L1037.4,506.0 L1043.1,504.7 L1048.8,502.8 L1054.5,500.7 L1060.2,499.2 L1065.9,497.2 L1071.6,495.5 L1077.3,494.6 L1083.0,492.2 L1088.7,489.4 L1094.4,487.0 L1100.1,484.9 L1105.8,483.2 L1111.5,482.6 L1117.2,482.2 L1122.9,483.0 L1128.6,483.4 L1134.3,483.7 L1140.0,484.0 L1145.7,484.9 L1151.4,485.3 L1157.1,485.8 L1162.8,486.9 L1168.5,487.8 L1174.2,489.8 L1179.9,491.5 L1185.6,494.2 L1191.3,497.6 L1197.0,500.7 L1202.7,502.5 L1208.4,503.9 L1214.1,505.4 L1219.8,507.2 L1225.5,510.1 L1231.2,512.7 L1236.9,514.2 L1242.6,515.9 L1248.3,516.9 L1254.0,518.8 L1259.7,520.1 L1265.4,521.6 L1271.1,523.2 L1276.8,523.3 L1282.5,523.9 L1288.2,524.4 L1293.9,525.3 L1299.6,526.3 L1305.3,527.1 L1311.0,527.3 L1316.7,527.5 L1322.4,527.7 L1328.1,526.3 L1333.8,525.4 L1339.5,524.5 L1345.2,524.2 L1350.9,524.9 L1356.6,524.5 L1362.3,523.4 L1368.0,521.9 L1373.7,520.6 L1379.4,519.6 L1385.1,518.4 L1390.8,517.6 L1396.5,515.6 L1402.2,513.5 L1407.9,511.0 L1413.6,508.1 L1419.3,508.9 L1425.0,510.2 L1430.7,511.0 L1436.4,511.9 L1442.1,511.1 L1447.8,511.0 L1453.5,511.0 L1459.2,510.4 L1464.9,510.3 L1470.6,510.5 L1476.3,509.4 L1482.0,509.4 L1487.7,509.2 L1493.4,509.1 L1499.1,509.1 L1504.8,509.6 L1510.5,510.7 L1516.2,512.6 L1521.9,514.8 L1527.6,517.8 L1533.3,520.8 L1539.0,523.8 L1544.7,526.1 L1550.4,528.2 L1556.1,529.9 L1561.8,528.5 L1567.5,525.9 L1573.2,522.8 L1578.9,519.7 L1584.6,518.5 L1590.3,516.6 L1596.0,515.2 L1601.7,514.0 L1607.4,513.1 L1613.1,512.8 L1618.8,513.1 L1624.5,512.8 L1630.2,513.3 L1635.9,512.9 L1641.6,513.0 L1647.3,513.5 L1653.0,513.0 L1658.7,511.4 L1664.4,510.0 L1670.1,507.9 L1675.8,505.3 L1681.5,502.0 L1687.2,500.3 L1692.9,497.4 L1698.6,495.6 L1704.3,493.3 L1710.0,492.0 L1715.7,490.7 L1721.4,489.1 L1727.1,486.7 L1732.8,485.5 L1738.5,486.1 L1744.2,487.4 L1749.9,488.1 L1755.6,488.7 L1761.3,489.6 L1767.0,490.5 L1772.7,491.1 L1778.4,491.3 L1784.1,491.2 L1789.8,491.0 L1795.5,491.0 L1801.2,491.3 L1806.9,491.1 L1812.6,491.8 L1818.3,492.5 L1824.0,493.9 L1829.7,495.3 L1835.4,497.6 L1841.1,499.1 L1846.8,501.6 L1852.5,503.5 L1858.2,506.2 L1862.0,508.0" fill="none" stroke="#808080" stroke-width="2.0" stroke-opacity="0.9" stroke-linejoin="round" /><path d="M74.1,527.7 L79.8,528.3 L85.5,527.9 L91.2,527.1 L96.9,527.7 L102.6,529.7 L108.3,532.0 L114.0,534.9 L119.7,537.4 L125.4,536.1 L131.1,534.7 L136.8,532.1 L142.5,531.2 L148.2,530.4 L153.9,528.3 L159.6,524.4 L165.3,520.0 L171.0,518.1 L176.7,517.0 L182.4,517.6 L188.1,519.1 L193.8,522.0 L199.5,524.4 L205.2,525.8 L210.9,527.0 L216.6,524.1 L222.3,519.7 L228.0,514.2 L233.7,510.7 L239.4,510.6 L245.1,509.6 L250.8,506.6 L256.5,502.2 L262.2,496.9 L267.9,490.7 L273.6,483.6 L279.3,480.2 L285.0,478.5 L290.7,475.1 L296.4,474.3 L302.1,473.4 L307.8,474.6 L313.5,474.3 L319.2,472.2 L324.9,475.0 L330.6,479.8 L336.3,485.0 L342.0,489.9 L347.7,492.5 L353.4,496.7 L359.1,499.3 L364.8,503.6 L370.5,506.2 L376.2,508.3 L381.9,513.9 L387.6,518.2 L393.3,525.0 L399.0,530.4 L404.7,531.6 L410.4,532.9 L416.1,533.8 L421.8,536.2 L427.5,536.5 L433.2,536.8 L438.9,538.2 L444.6,538.4 L450.3,540.1 L456.0,540.8 L461.7,537.4 L467.4,533.3 L473.1,526.4 L478.8,523.2 L484.5,522.3 L490.2,518.9 L495.9,515.9 L501.6,514.0 L507.3,515.6 L513.0,517.0 L518.7,515.0 L524.4,510.8 L530.1,506.7 L535.8,505.8 L541.5,506.6 L547.2,506.7 L552.9,510.0 L558.6,512.6 L564.3,515.7 L570.0,520.4 L575.7,523.3 L581.4,525.3 L587.1,525.8 L592.8,526.7 L598.5,527.5 L604.2,528.9 L609.9,532.3 L615.6,532.3 L621.3,530.7 L627.0,530.2 L632.7,527.3 L638.4,524.2 L644.1,520.6 L649.8,515.0 L655.5,512.2 L661.2,510.4 L666.9,509.1 L672.6,506.8 L678.3,504.0 L684.0,501.7 L689.7,497.2 L695.4,493.8 L701.1,490.5 L706.8,491.1 L712.5,493.3 L718.2,492.8 L723.9,491.6 L729.6,493.6 L735.3,495.0 L741.0,494.9 L746.7,495.1 L752.4,496.0 L758.1,497.7 L763.8,498.5 L769.5,502.5 L775.2,507.2 L780.9,510.8 L786.6,513.8 L792.3,516.5 L798.0,519.3 L803.7,521.2 L809.4,521.8 L815.1,518.2 L820.8,514.4 L826.5,511.9 L832.2,507.6 L837.9,507.4 L843.6,510.6 L849.3,512.3 L855.0,512.8 L860.7,514.7 L866.4,515.0 L872.1,511.9 L877.8,510.4 L883.5,510.2 L889.2,508.1 L894.9,507.1 L900.6,509.5 L906.3,511.1 L912.0,513.4 L917.7,512.6 L923.4,510.7 L929.1,511.0 L934.8,508.6 L940.5,508.5 L946.2,507.0 L951.9,509.9 L957.6,510.8 L963.3,510.9 L969.0,510.9 L974.7,511.9 L980.4,508.7 L986.1,506.8 L991.8,506.3 L997.5,506.1 L1003.2,505.8 L1008.9,504.2 L1014.6,506.6 L1020.3,504.7 L1026.0,503.3 L1031.7,498.9 L1037.4,496.4 L1043.1,493.3 L1048.8,490.9 L1054.5,487.9 L1060.2,487.5 L1065.9,484.7 L1071.6,483.2 L1077.3,481.4 L1083.0,477.0 L1088.7,471.8 L1094.4,467.7 L1100.1,465.1 L1105.8,462.9 L1111.5,463.5 L1117.2,464.9 L1122.9,468.3 L1128.6,473.3 L1134.3,479.6 L1140.0,484.0 L1145.7,490.9 L1151.4,494.0 L1157.1,499.0 L1162.8,505.0 L1168.5,511.8 L1174.2,517.5 L1179.9,523.3 L1185.6,529.4 L1191.3,535.0 L1197.0,538.3 L1202.7,537.7 L1208.4,535.0 L1214.1,534.3 L1219.8,534.1 L1225.5,532.8 L1231.2,531.3 L1236.9,527.9 L1242.6,525.0 L1248.3,520.9 L1254.0,519.7 L1259.7,518.6 L1265.4,517.7 L1271.1,516.9 L1276.8,514.9 L1282.5,516.4 L1288.2,520.9 L1293.9,522.9 L1299.6,526.0 L1305.3,527.4 L1311.0,528.7 L1316.7,531.9 L1322.4,534.7 L1328.1,536.1 L1333.8,535.2 L1339.5,534.3 L1345.2,530.7 L1350.9,527.7 L1356.6,527.1 L1362.3,523.7 L1368.0,518.5 L1373.7,512.4 L1379.4,505.1 L1385.1,498.4 L1390.8,492.9 L1396.5,487.6 L1402.2,481.8 L1407.9,479.6 L1413.6,475.3 L1419.3,478.4 L1425.0,483.6 L1430.7,487.9 L1436.4,493.0 L1442.1,496.9 L1447.8,502.1 L1453.5,506.4 L1459.2,510.8 L1464.9,516.0 L1470.6,520.0 L1476.3,521.0 L1482.0,525.1 L1487.7,526.8 L1493.4,530.4 L1499.1,527.2 L1504.8,522.3 L1510.5,518.5 L1516.2,515.9 L1521.9,516.9 L1527.6,518.0 L1533.3,520.4 L1539.0,523.7 L1544.7,522.8 L1550.4,524.3 L1556.1,525.8 L1561.8,524.6 L1567.5,523.5 L1573.2,520.3 L1578.9,518.2 L1584.6,518.5 L1590.3,516.7 L1596.0,513.2 L1601.7,509.4 L1607.4,505.8 L1613.1,502.8 L1618.8,498.1 L1624.5,497.6 L1630.2,497.5 L1635.9,497.3 L1641.6,499.4 L1647.3,502.9 L1653.0,505.3 L1658.7,505.5 L1664.4,505.4 L1670.1,505.1 L1675.8,503.7 L1681.5,501.2 L1687.2,498.6 L1692.9,493.5 L1698.6,490.2 L1704.3,485.1 L1710.0,480.2 L1715.7,476.3 L1721.4,470.9 L1727.1,464.5 L1732.8,462.5 L1738.5,465.8 L1744.2,468.8 L1749.9,472.2 L1755.6,477.1 L1761.3,482.6 L1767.0,487.6 L1772.7,494.8 L1778.4,498.1 L1784.1,503.2 L1789.8,507.3 L1795.5,510.9 L1801.2,513.9 L1806.9,517.4 L1812.6,520.8 L1818.3,518.3 L1824.0,515.9 L1829.7,514.6 L1835.4,513.4 L1841.1,510.5 L1846.8,507.9 L1852.5,504.9 L1858.2,506.5 L1862.0,507.5" fill="none" stroke="#2a8060" stroke-width="2.0" stroke-opacity="0.9" stroke-linejoin="round" /><path d="M0.0,498.0 L5.7,500.5 L11.4,496.1 L17.1,499.4 L22.8,482.1 L28.5,491.0 L34.2,479.0 L39.9,472.6 L45.6,498.1 L51.3,506.0 L57.0,546.5 L62.7,542.0 L68.4,547.3 L74.1,540.2 L79.8,541.2 L85.5,533.9 L91.2,525.1 L96.9,538.9 L102.6,526.3 L108.3,536.9 L114.0,527.2 L119.7,517.4 L125.4,506.0 L131.1,510.7 L136.8,524.9 L142.5,536.0 L148.2,541.8 L153.9,523.4 L159.6,506.1 L165.3,491.1 L171.0,503.3 L176.7,524.7 L182.4,527.4 L188.1,552.0 L193.8,555.5 L199.5,540.8 L205.2,519.8 L210.9,522.7 L216.6,498.8 L222.3,495.3 L228.0,488.7 L233.7,487.8 L239.4,499.4 L245.1,476.7 L250.8,468.7 L256.5,476.0 L262.2,470.0 L267.9,479.3 L273.6,472.7 L279.3,491.3 L285.0,487.8 L290.7,475.5 L296.4,478.5 L302.1,474.8 L307.8,486.3 L313.5,472.8 L319.2,471.1 L324.9,494.0 L330.6,507.9 L336.3,522.8 L342.0,515.6 L347.7,507.0 L353.4,515.6 L359.1,520.0 L364.8,534.8 L370.5,507.8 L376.2,507.2 L381.9,538.4 L387.6,540.6 L393.3,550.9 L399.0,537.1 L404.7,523.1 L410.4,536.8 L416.1,546.8 L421.8,553.9 L427.5,521.1 L433.2,530.9 L438.9,546.5 L444.6,549.3 L450.3,533.2 L456.0,521.6 L461.7,512.0 L467.4,507.3 L473.1,483.0 L478.8,501.5 L484.5,510.0 L490.2,498.1 L495.9,511.2 L501.6,527.0 L507.3,530.0 L513.0,537.7 L518.7,522.5 L524.4,503.6 L530.1,485.5 L535.8,504.2 L541.5,511.3 L547.2,499.8 L552.9,510.5 L558.6,523.4 L564.3,540.8 L570.0,545.5 L575.7,542.9 L581.4,550.3 L587.1,541.0 L592.8,552.7 L598.5,535.4 L604.2,522.3 L609.9,524.8 L615.6,513.4 L621.3,504.2 L627.0,504.0 L632.7,491.3 L638.4,498.9 L644.1,505.8 L649.8,491.8 L655.5,512.3 L661.2,528.0 L666.9,521.8 L672.6,524.1 L678.3,502.5 L684.0,493.5 L689.7,470.8 L695.4,469.3 L701.1,456.6 L706.8,494.6 L712.5,499.2 L718.2,482.5 L723.9,485.2 L729.6,500.7 L735.3,522.6 L741.0,522.4 L746.7,519.4 L752.4,529.2 L758.1,515.9 L763.8,500.7 L769.5,511.1 L775.2,515.8 L780.9,499.5 L786.6,531.3 L792.3,532.7 L798.0,518.4 L803.7,513.6 L809.4,515.2 L815.1,496.8 L820.8,493.1 L826.5,500.0 L832.2,493.1 L837.9,512.4 L843.6,529.2 L849.3,526.1 L855.0,521.9 L860.7,517.9 L866.4,532.9 L872.1,504.5 L877.8,504.9 L883.5,510.4 L889.2,494.2 L894.9,485.6 L900.6,511.5 L906.3,512.5 L912.0,512.5 L917.7,506.3 L923.4,511.2 L929.1,526.9 L934.8,499.5 L940.5,516.3 L946.2,518.2 L951.9,529.3 L957.6,512.1 L963.3,512.1 L969.0,493.5 L974.7,495.8 L980.4,482.7 L986.1,494.3 L991.8,506.1 L997.5,501.9 L1003.2,507.1 L1008.9,509.7 L1014.6,517.5 L1020.3,497.6 L1026.0,503.9 L1031.7,486.4 L1037.4,485.2 L1043.1,480.0 L1048.8,464.4 L1054.5,459.4 L1060.2,470.0 L1065.9,460.1 L1071.6,485.2 L1077.3,476.7 L1083.0,455.3 L1088.7,449.5 L1094.4,469.2 L1100.1,458.0 L1105.8,471.0 L1111.5,478.7 L1117.2,486.3 L1122.9,500.6 L1128.6,504.2 L1134.3,514.2 L1140.0,510.0 L1145.7,528.7 L1151.4,520.4 L1157.1,530.7 L1162.8,523.5 L1168.5,526.9 L1174.2,536.4 L1179.9,529.2 L1185.6,546.7 L1191.3,549.1 L1197.0,536.7 L1202.7,514.7 L1208.4,496.6 L1214.1,522.4 L1219.8,521.2 L1225.5,526.2 L1231.2,515.6 L1236.9,506.1 L1242.6,502.2 L1248.3,494.3 L1254.0,527.5 L1259.7,519.1 L1265.4,538.4 L1271.1,542.2 L1276.8,516.8 L1282.5,525.8 L1288.2,540.2 L1293.9,543.3 L1299.6,555.3 L1305.3,544.9 L1311.0,532.4 L1316.7,540.8 L1322.4,533.6 L1328.1,512.6 L1333.8,524.7 L1339.5,515.1 L1345.2,507.4 L1350.9,515.5 L1356.6,511.2 L1362.3,493.5 L1368.0,489.3 L1373.7,482.8 L1379.4,480.6 L1385.1,473.6 L1390.8,472.1 L1396.5,479.3 L1402.2,465.2 L1407.9,476.6 L1413.6,470.0 L1419.3,536.7 L1425.0,557.5 L1430.7,561.4 L1436.4,565.1 L1442.1,534.9 L1447.8,544.1 L1453.5,530.0 L1459.2,528.1 L1464.9,530.7 L1470.6,517.2 L1476.3,497.9 L1482.0,513.1 L1487.7,503.3 L1493.4,513.6 L1499.1,510.0 L1504.8,506.6 L1510.5,516.5 L1516.2,529.9 L1521.9,537.0 L1527.6,547.8 L1533.3,547.0 L1539.0,555.8 L1544.7,521.9 L1550.4,529.6 L1556.1,511.4 L1561.8,502.6 L1567.5,493.4 L1573.2,482.3 L1578.9,488.4 L1584.6,504.3 L1590.3,497.5 L1596.0,495.0 L1601.7,498.5 L1607.4,506.4 L1613.1,510.8 L1618.8,503.9 L1624.5,506.1 L1630.2,516.4 L1635.9,502.7 L1641.6,513.9 L1647.3,519.1 L1653.0,503.8 L1658.7,489.2 L1664.4,503.3 L1670.1,494.9 L1675.8,480.1 L1681.5,474.1 L1687.2,480.7 L1692.9,457.1 L1698.6,465.1 L1704.3,445.2 L1710.0,460.2 L1715.7,449.9 L1721.4,448.7 L1727.1,444.1 L1732.8,467.5 L1738.5,510.7 L1744.2,529.9 L1749.9,525.0 L1755.6,525.5 L1761.3,526.2 L1767.0,528.7 L1772.7,532.8 L1778.4,507.8 L1784.1,510.4 L1789.8,514.9 L1795.5,502.3 L1801.2,496.9 L1806.9,497.5 L1812.6,514.6 L1818.3,496.9 L1824.0,509.8 L1829.7,514.5 L1835.4,515.5 L1841.1,502.5 L1846.8,507.2 L1852.5,507.0 L1858.2,517.4 L1862.0,524.3" fill="none" stroke="#ff33ff" stroke-width="1.1" stroke-opacity="0.85" stroke-linejoin="round" /><path d="M0.0,542.9 L5.7,545.0 L11.4,533.4 L17.1,537.0 L22.8,496.3 L28.5,508.9 L34.2,485.4 L39.9,474.4 L45.6,511.3 L51.3,521.7 L57.0,563.4 L62.7,556.5 L68.4,561.7 L74.1,550.1 L79.8,551.4 L85.5,538.4 L91.2,523.3 L96.9,545.2 L102.6,524.3 L108.3,541.0 L114.0,525.3 L119.7,510.0 L125.4,493.3 L131.1,502.2 L136.8,526.8 L142.5,543.3 L148.2,551.1 L153.9,521.0 L159.6,496.0 L165.3,476.8 L171.0,497.4 L176.7,529.1 L182.4,532.9 L188.1,562.1 L193.8,565.7 L199.5,543.6 L205.2,513.6 L210.9,518.3 L216.6,486.3 L222.3,481.9 L228.0,473.7 L233.7,472.6 L239.4,494.3 L245.1,463.6 L250.8,454.8 L256.5,467.2 L262.2,459.5 L267.9,475.3 L273.6,465.7 L279.3,496.1 L285.0,489.9 L290.7,470.4 L296.4,475.5 L302.1,469.6 L307.8,489.9 L313.5,467.7 L319.2,465.2 L324.9,502.6 L330.6,522.2 L336.3,540.5 L342.0,527.5 L347.7,512.1 L353.4,525.1 L359.1,531.5 L364.8,550.5 L370.5,506.3 L376.2,505.4 L381.9,548.2 L387.6,550.7 L393.3,562.3 L399.0,540.8 L404.7,519.8 L410.4,540.1 L416.1,553.2 L421.8,561.6 L427.5,515.0 L433.2,529.6 L438.9,550.6 L444.6,554.1 L450.3,530.5 L456.0,514.0 L461.7,500.8 L467.4,494.3 L473.1,465.1 L478.8,495.4 L484.5,508.5 L490.2,491.4 L495.9,512.0 L501.6,534.2 L507.3,538.3 L513.0,548.3 L518.7,523.3 L524.4,495.4 L530.1,472.6 L535.8,501.7 L541.5,512.3 L547.2,495.3 L552.9,512.0 L558.6,530.5 L564.3,552.0 L570.0,557.3 L575.7,552.9 L581.4,561.8 L587.1,546.0 L592.8,561.4 L598.5,534.3 L604.2,514.9 L609.9,519.4 L615.6,502.2 L621.3,489.3 L627.0,489.0 L632.7,471.8 L638.4,487.1 L644.1,500.5 L649.8,479.2 L655.5,514.4 L661.2,536.7 L666.9,526.5 L672.6,530.0 L678.3,495.3 L684.0,482.7 L689.7,456.2 L695.4,454.6 L701.1,442.5 L706.8,497.4 L712.5,503.6 L718.2,479.7 L723.9,483.7 L729.6,506.6 L735.3,534.9 L741.0,534.6 L746.7,529.1 L752.4,542.5 L758.1,519.1 L763.8,495.1 L769.5,512.1 L775.2,519.6 L780.9,493.5 L786.6,539.3 L792.3,541.1 L798.0,518.6 L803.7,511.2 L809.4,513.9 L815.1,485.8 L820.8,480.7 L826.5,493.7 L832.2,483.0 L837.9,516.4 L843.6,540.1 L849.3,534.7 L855.0,527.2 L860.7,519.9 L866.4,543.2 L872.1,497.8 L877.8,498.5 L883.5,508.2 L889.2,483.6 L894.9,472.2 L900.6,514.4 L906.3,515.8 L912.0,515.8 L917.7,504.7 L923.4,513.7 L929.1,538.5 L934.8,493.6 L940.5,519.4 L946.2,522.2 L951.9,538.1 L957.6,510.4 L963.3,510.4 L969.0,482.8 L974.7,486.8 L980.4,469.1 L986.1,489.5 L991.8,508.8 L997.5,501.7 L1003.2,510.6 L1008.9,515.0 L1014.6,527.9 L1020.3,492.2 L1026.0,503.4 L1031.7,476.6 L1037.4,474.9 L1043.1,467.5 L1048.8,449.2 L1054.5,444.3 L1060.2,462.7 L1065.9,450.3 L1071.6,489.0 L1077.3,476.0 L1083.0,448.8 L1088.7,442.7 L1094.4,470.3 L1100.1,455.3 L1105.8,473.4 L1111.5,484.2 L1117.2,495.0 L1122.9,514.7 L1128.6,519.4 L1134.3,532.6 L1140.0,524.2 L1145.7,547.6 L1151.4,532.4 L1157.1,545.6 L1162.8,532.5 L1168.5,537.5 L1174.2,550.3 L1179.9,536.7 L1185.6,559.5 L1191.3,562.1 L1197.0,540.7 L1202.7,506.5 L1208.4,482.5 L1214.1,522.9 L1219.8,521.0 L1225.5,528.7 L1231.2,511.9 L1236.9,497.6 L1242.6,491.8 L1248.3,480.3 L1254.0,533.9 L1259.7,520.8 L1265.4,546.8 L1271.1,551.4 L1276.8,513.2 L1282.5,526.7 L1288.2,546.3 L1293.9,550.2 L1299.6,564.3 L1305.3,548.4 L1311.0,529.5 L1316.7,542.5 L1322.4,531.3 L1328.1,500.8 L1333.8,521.2 L1339.5,507.2 L1345.2,496.2 L1350.9,510.7 L1356.6,504.0 L1362.3,478.8 L1368.0,473.3 L1373.7,465.3 L1379.4,462.6 L1385.1,454.3 L1390.8,452.7 L1396.5,468.0 L1402.2,449.8 L1407.9,470.7 L1413.6,461.2 L1419.3,549.9 L1425.0,568.7 L1430.7,571.9 L1436.4,575.0 L1442.1,533.2 L1447.8,545.7 L1453.5,526.4 L1459.2,523.6 L1464.9,527.9 L1470.6,507.7 L1476.3,482.0 L1482.0,507.9 L1487.7,494.2 L1493.4,511.2 L1499.1,505.7 L1504.8,500.3 L1510.5,517.9 L1516.2,538.5 L1521.9,548.2 L1527.6,561.1 L1533.3,559.5 L1539.0,569.2 L1544.7,516.3 L1550.4,528.3 L1556.1,502.6 L1561.8,490.9 L1567.5,479.2 L1573.2,466.0 L1578.9,476.9 L1584.6,503.7 L1590.3,493.1 L1596.0,489.3 L1601.7,495.6 L1607.4,510.1 L1613.1,517.7 L1618.8,504.1 L1624.5,508.4 L1630.2,527.0 L1635.9,500.2 L1641.6,519.9 L1647.3,528.3 L1653.0,500.4 L1658.7,478.4 L1664.4,502.7 L1670.1,489.5 L1675.8,469.0 L1681.5,461.6 L1687.2,473.3 L1692.9,445.7 L1698.6,458.0 L1704.3,437.5 L1710.0,457.8 L1715.7,445.6 L1721.4,444.2 L1727.1,439.0 L1732.8,472.1 L1738.5,524.8 L1744.2,544.9 L1749.9,537.4 L1755.6,537.9 L1761.3,538.8 L1767.0,542.1 L1772.7,547.7 L1778.4,503.8 L1784.1,508.3 L1789.8,516.2 L1795.5,495.0 L1801.2,486.6 L1806.9,487.7 L1812.6,519.6 L1818.3,490.2 L1824.0,511.6 L1829.7,519.2 L1835.4,520.8 L1841.1,497.7 L1846.8,506.4 L1852.5,506.0 L1858.2,525.1 L1862.0,537.8" fill="none" stroke="#4444ff" stroke-width="1.1" stroke-opacity="0.8" stroke-linejoin="round" /></g><g clip-path="url(#cs)"><path d="M22.8,730.4 L28.5,714.7 L34.2,699.2 L39.9,683.4 L45.6,667.3 L51.3,665.4 L57.0,684.5 L62.7,723.0 L68.4,748.8 L74.1,758.0 L79.8,757.1 L85.5,742.9 L91.2,717.1 L96.9,691.2 L102.6,677.8 L108.3,688.0 L114.0,697.6 L119.7,704.1 L125.4,686.8 L131.1,667.5 L136.8,652.0 L142.5,665.1 L148.2,694.8 L153.9,724.2 L159.6,726.3 L165.3,702.8 L171.0,672.9 L176.7,663.9 L182.4,682.1 L188.1,715.2 L193.8,742.1 L199.5,753.1 L205.2,743.7 L210.9,723.3 L216.6,694.0 L222.3,668.6 L228.0,646.4 L233.7,636.6 L239.4,637.1 L245.1,641.7 L250.8,643.2 L256.5,638.0 L262.2,632.9 L267.9,633.6 L273.6,634.4 L279.3,649.5 L285.0,666.7 L290.7,685.1 L296.4,680.9 L302.1,665.1 L307.8,657.2 L313.5,653.4 L319.2,652.9 L324.9,646.1 L330.6,660.1 L336.3,692.8 L342.0,729.4 L347.7,743.6 L353.4,736.1 L359.1,723.4 L364.8,721.5 L370.5,721.0 L376.2,716.6 L381.9,709.5 L387.6,713.5 L393.3,731.0 L399.0,743.4 L404.7,744.4 L410.4,732.5 L416.1,725.9 L421.8,731.3 L427.5,737.0 L433.2,738.2 L438.9,731.1 L444.6,733.4 L450.3,736.0 L456.0,732.4 L461.7,712.8 L467.4,685.1 L473.1,656.1 L478.8,638.2 L484.5,639.6 L490.2,656.1 L495.9,679.7 L501.6,701.2 L507.3,724.1 L513.0,742.6 L518.7,749.5 L524.4,736.7 L530.1,704.5 L535.8,670.9 L541.5,654.4 L547.2,659.7 L552.9,678.6 L558.6,697.9 L564.3,722.1 L570.0,742.3 L575.7,758.3 L581.4,762.8 L587.1,761.1 L592.8,757.2 L598.5,749.0 L604.2,734.6 L609.9,711.3 L615.6,684.5 L621.3,663.5 L627.0,648.7 L632.7,640.3 L638.4,636.5 L644.1,640.7 L649.8,649.6 L655.5,668.0 L661.2,688.7 L666.9,716.3 L672.6,731.8 L678.3,731.7 L684.0,713.8 L689.7,683.5 L695.4,658.1 L701.1,636.6 L706.8,637.0 L712.5,650.3 L718.2,672.6 L723.9,682.9 L729.6,682.7 L735.3,688.1 L741.0,706.1 L746.7,729.0 L752.4,742.6 L758.1,739.2 L763.8,719.2 L769.5,689.2 L775.2,669.5 L780.9,664.0 L786.6,678.1 L792.3,696.5 L798.0,723.2 L803.7,732.2 L809.4,726.2 L815.1,700.0 L820.8,674.2 L826.5,654.5 L832.2,647.8 L837.9,659.7 L843.6,684.9 L849.3,719.9 L855.0,741.2 L860.7,745.4 L866.4,737.8 L872.1,721.3 L877.8,703.4 L883.5,674.8 L889.2,656.8 L894.9,643.8 L900.6,649.9 L906.3,668.7 L912.0,702.7 L917.7,723.7 L923.4,731.8 L929.1,730.1 L934.8,723.0 L940.5,716.6 L946.2,705.4 L951.9,718.4 L957.6,728.8 L963.3,737.5 L969.0,715.8 L974.7,689.6 L980.4,656.7 L986.1,642.9 L991.8,642.7 L997.5,661.9 L1003.2,686.0 L1008.9,703.7 L1014.6,715.7 L1020.3,712.3 L1026.0,705.3 L1031.7,682.2 L1037.4,662.9 L1043.1,641.2 L1048.8,634.2 L1054.5,630.1 L1060.2,635.6 L1065.9,638.4 L1071.6,650.5 L1077.3,660.3 L1083.0,672.5 L1088.7,668.2 L1094.4,659.3 L1100.1,646.4 L1105.8,643.8 L1111.5,650.2 L1117.2,670.4 L1122.9,697.9 L1128.6,723.4 L1134.3,740.0 L1140.0,745.6 L1145.7,746.2 L1151.4,739.9 L1157.1,738.0 L1162.8,734.1 L1168.5,735.8 L1174.2,730.7 L1179.9,724.0 L1185.6,718.1 L1191.3,720.3 L1197.0,733.7 L1202.7,735.1 L1208.4,717.0 L1214.1,690.7 L1219.8,680.6 L1225.5,698.0 L1231.2,715.6 L1236.9,721.7 L1242.6,706.5 L1248.3,684.8 L1254.0,678.2 L1259.7,688.5 L1265.4,719.5 L1271.1,740.8 L1276.8,752.0 L1282.5,746.4 L1288.2,740.2 L1293.9,737.7 L1299.6,741.6 L1305.3,742.9 L1311.0,740.9 L1316.7,733.3 L1322.4,725.3 L1328.1,710.5 L1333.8,695.7 L1339.5,678.7 L1345.2,671.7 L1350.9,669.2 L1356.6,677.1 L1362.3,681.2 L1368.0,673.4 L1373.7,652.2 L1379.4,633.9 L1385.1,627.2 L1390.8,630.1 L1396.5,635.1 L1402.2,636.4 L1407.9,641.8 L1413.6,644.3 L1419.3,664.3 L1425.0,686.8 L1430.7,720.4 L1436.4,738.8 L1442.1,743.7 L1447.8,732.9 L1453.5,711.7 L1459.2,689.7 L1464.9,666.0 L1470.6,649.9 L1476.3,638.2 L1482.0,637.4 L1487.7,640.3 L1493.4,654.1 L1499.1,667.0 L1504.8,685.4 L1510.5,700.5 L1516.2,717.6 L1521.9,735.5 L1527.6,746.8 L1533.3,749.5 L1539.0,743.6 L1544.7,732.2 L1550.4,719.2 L1556.1,695.0 L1561.8,672.2 L1567.5,650.0 L1573.2,639.2 L1578.9,634.5 L1584.6,640.4 L1590.3,654.6 L1596.0,672.0 L1601.7,680.3 L1607.4,684.3 L1613.1,690.4 L1618.8,701.5 L1624.5,709.5 L1630.2,711.7 L1635.9,708.1 L1641.6,707.0 L1647.3,707.7 L1653.0,715.1 L1658.7,711.7 L1664.4,698.0 L1670.1,675.7 L1675.8,659.5 L1681.5,644.4 L1687.2,637.2 L1692.9,635.2 L1698.6,643.7 L1704.3,650.0 L1710.0,658.4 L1715.7,661.6 L1721.4,661.5 L1727.1,649.8 L1732.8,641.0 L1738.5,646.9 L1744.2,676.2 L1749.9,715.7 L1755.6,745.3 L1761.3,758.1 L1767.0,759.0 L1772.7,758.8 L1778.4,743.0 L1784.1,713.9 L1789.8,672.8 L1795.5,649.5 L1801.2,640.0 L1806.9,639.5 L1812.6,646.0 L1818.3,652.4 L1824.0,672.4 L1829.7,690.3 L1835.4,719.2 L1841.1,731.5 L1846.8,730.7 L1852.5,714.2 L1858.2,706.6 L1862.0,701.5" fill="none" stroke="#ff33ff" stroke-width="1.1" stroke-opacity="0.85" stroke-linejoin="round" /><path d="M11.4,744.0 L17.1,732.5 L22.8,714.4 L28.5,704.6 L34.2,683.4 L39.9,664.3 L45.6,655.5 L51.3,676.5 L57.0,719.9 L62.7,754.5 L68.4,761.7 L74.1,757.8 L79.8,751.8 L85.5,719.0 L91.2,680.6 L96.9,674.0 L102.6,678.7 L108.3,711.2 L114.0,702.8 L119.7,698.5 L125.4,659.2 L131.1,644.7 L136.8,652.3 L142.5,698.2 L148.2,734.1 L153.9,740.4 L159.6,704.5 L165.3,663.5 L171.0,650.7 L176.7,677.7 L182.4,718.0 L188.1,750.1 L193.8,758.2 L199.5,751.1 L205.2,721.7 L210.9,697.1 L216.6,663.0 L222.3,645.6 L228.0,630.8 L233.7,633.5 L239.4,647.1 L245.1,644.6 L250.8,638.0 L256.5,631.3 L262.2,629.4 L267.9,640.0 L273.6,633.7 L279.3,674.8 L285.0,691.7 L290.7,688.9 L296.4,662.2 L302.1,644.2 L307.8,665.1 L313.5,650.9 L319.2,642.7 L324.9,644.8 L330.6,692.7 L336.3,741.0 L342.0,754.4 L347.7,735.4 L353.4,718.7 L359.1,716.2 L364.8,729.7 L370.5,717.2 L376.2,702.9 L381.9,708.4 L387.6,729.1 L393.3,755.6 L399.0,745.6 L404.7,732.0 L410.4,719.9 L416.1,725.9 L421.8,748.0 L427.5,737.0 L433.2,729.6 L438.9,726.5 L444.6,743.9 L450.3,737.6 L456.0,715.8 L461.7,685.2 L467.4,654.3 L473.1,628.8 L478.8,631.4 L484.5,658.4 L490.2,678.4 L495.9,702.1 L501.6,723.0 L507.3,747.3 L513.0,757.5 L518.7,743.7 L524.4,708.7 L530.1,661.0 L535.8,642.8 L541.5,659.3 L547.2,677.1 L552.9,699.4 L558.6,717.2 L564.3,749.6 L570.0,760.0 L575.7,765.3 L581.4,763.2 L587.1,755.0 L592.8,753.5 L598.5,738.5 L604.2,711.8 L609.9,683.5 L615.6,658.2 L621.3,649.0 L627.0,638.9 L632.7,633.1 L638.4,637.6 L644.1,651.5 L649.8,659.6 L655.5,692.8 L661.2,713.6 L666.9,742.4 L672.6,739.4 L678.3,713.4 L684.0,688.6 L689.7,648.5 L695.4,637.3 L701.1,624.0 L706.8,649.7 L712.5,677.3 L718.2,690.9 L723.9,680.5 L729.6,676.8 L735.3,707.0 L741.0,734.6 L746.7,745.5 L752.4,747.8 L758.1,724.4 L763.8,685.4 L769.5,657.8 L775.2,665.3 L780.9,668.9 L786.6,700.3 L792.3,720.4 L798.0,749.1 L803.7,727.1 L809.4,702.4 L815.1,670.6 L820.8,649.6 L826.5,643.2 L832.2,650.5 L837.9,685.5 L843.6,718.7 L849.3,755.5 L855.0,749.5 L860.7,731.1 L866.4,732.9 L872.1,700.0 L877.8,677.4 L883.5,647.0 L889.2,645.9 L894.9,638.5 L900.6,665.2 L906.3,702.5 L912.0,740.3 L917.7,728.2 L923.4,726.7 L929.1,735.2 L934.8,707.0 L940.5,707.6 L946.2,701.5 L951.9,746.2 L957.6,738.7 L963.3,727.8 L969.0,680.9 L974.7,660.1 L980.4,629.3 L986.1,639.3 L991.8,659.4 L997.5,687.0 L1003.2,711.5 L1008.9,712.6 L1014.6,723.0 L1020.3,701.3 L1026.0,691.6 L1031.7,653.8 L1037.4,643.2 L1043.1,626.5 L1048.8,632.8 L1054.5,630.9 L1060.2,643.2 L1065.9,641.2 L1071.6,667.2 L1077.3,672.6 L1083.0,677.7 L1088.7,654.4 L1094.4,645.8 L1100.1,639.1 L1105.8,646.5 L1111.5,665.0 L1117.2,699.5 L1122.9,729.1 L1128.6,741.4 L1134.3,749.6 L1140.0,745.8 L1145.7,743.1 L1151.4,730.9 L1157.1,740.0 L1162.8,731.5 L1168.5,736.0 L1174.2,724.6 L1179.9,711.4 L1185.6,718.1 L1191.3,731.5 L1197.0,751.6 L1202.7,722.1 L1208.4,677.3 L1214.1,672.6 L1219.8,691.9 L1225.5,729.3 L1231.2,725.6 L1236.9,710.2 L1242.6,683.7 L1248.3,660.6 L1254.0,690.5 L1259.7,714.3 L1265.4,753.7 L1271.1,754.5 L1276.8,747.8 L1282.5,736.9 L1288.2,735.8 L1293.9,740.4 L1299.6,748.7 L1305.3,739.6 L1311.0,734.6 L1316.7,725.7 L1322.4,715.7 L1328.1,690.1 L1333.8,681.3 L1339.5,664.7 L1345.2,669.2 L1350.9,673.7 L1356.6,688.6 L1362.3,681.4 L1368.0,650.4 L1373.7,625.0 L1379.4,626.3 L1385.1,630.3 L1390.8,633.6 L1396.5,641.3 L1402.2,634.4 L1407.9,649.7 L1413.6,648.7 L1419.3,694.6 L1425.0,717.3 L1430.7,749.3 L1436.4,749.7 L1442.1,731.9 L1447.8,717.2 L1453.5,686.0 L1459.2,666.0 L1464.9,646.2 L1470.6,637.5 L1476.3,630.9 L1482.0,643.8 L1487.7,646.2 L1493.4,672.4 L1499.1,682.4 L1504.8,701.4 L1510.5,717.8 L1516.2,733.6 L1521.9,755.3 L1527.6,751.5 L1533.3,741.9 L1539.0,737.3 L1544.7,717.3 L1550.4,703.0 L1556.1,664.5 L1561.8,649.2 L1567.5,636.2 L1573.2,632.2 L1578.9,635.2 L1584.6,653.7 L1590.3,674.9 L1596.0,687.3 L1601.7,678.7 L1607.4,686.7 L1613.1,705.7 L1618.8,712.1 L1624.5,710.8 L1630.2,712.3 L1635.9,701.3 L1641.6,707.5 L1647.3,714.4 L1653.0,723.5 L1658.7,697.3 L1664.4,673.0 L1670.1,656.8 L1675.8,648.6 L1681.5,627.9 L1687.2,635.1 L1692.9,642.5 L1698.6,653.6 L1704.3,654.1 L1710.0,667.6 L1715.7,663.2 L1721.4,653.7 L1727.1,632.5 L1732.8,636.7 L1738.5,671.6 L1744.2,720.3 L1749.9,755.2 L1755.6,760.4 L1761.3,758.6 L1767.0,757.8 L1772.7,760.0 L1778.4,711.3 L1784.1,670.5 L1789.8,636.5 L1795.5,641.5 L1801.2,642.0 L1806.9,634.9 L1812.6,661.1 L1818.3,661.3 L1824.0,694.8 L1829.7,714.8 L1835.4,747.9 L1841.1,731.9 L1846.8,712.3 L1852.5,698.5 L1858.2,709.0 L1862.0,716.1" fill="none" stroke="#4444ff" stroke-width="1.1" stroke-opacity="0.8" stroke-linejoin="round" /></g><rect x="1862.5" y="230.5" width="26.5" height="9" rx="1.5" fill="#fff" stroke="#ff3030" stroke-width="1"/><text x="1875.8" y="238.0" text-anchor="middle" style="font-family:'Liberation Sans',sans-serif;font-size:8px;fill:#ff3030;">72.38</text><rect x="1862.5" y="241.9" width="26.5" height="9" rx="1.5" fill="#fff" stroke="#8a0f35" stroke-width="1"/><text x="1875.8" y="249.4" text-anchor="middle" style="font-family:'Liberation Sans',sans-serif;font-size:8px;fill:#8a0f35;">69.89</text><rect x="1862.5" y="253.0" width="26.5" height="9" rx="1.5" fill="#fff" stroke="#ff00ff" stroke-width="1"/><text x="1875.8" y="260.5" text-anchor="middle" style="font-family:'Liberation Sans',sans-serif;font-size:8px;fill:#ff00ff;">69.15</text><rect x="1862.5" y="264.7" width="26.5" height="9" rx="1.5" fill="#fff" stroke="#00c800" stroke-width="1"/><text x="1875.8" y="272.2" text-anchor="middle" style="font-family:'Liberation Sans',sans-serif;font-size:8px;fill:#00c800;">69.12</text><rect x="1862" y="275.6" width="27.5" height="10" rx="1.5" fill="#2a2aff"/><text x="1875.8" y="283.6" text-anchor="middle" style="font-family:'Liberation Sans',sans-serif;font-size:8px;fill:#fff;font-weight:bold;">68.59</text><rect x="1862.5" y="287.1" width="26.5" height="9" rx="1.5" fill="#fff" stroke="#11c8d8" stroke-width="1"/><text x="1875.8" y="294.6" text-anchor="middle" style="font-family:'Liberation Sans',sans-serif;font-size:8px;fill:#11c8d8;">68.28</text><rect x="1862.5" y="299.0" width="26.5" height="9" rx="1.5" fill="#fff" stroke="#177a17" stroke-width="1"/><text x="1875.8" y="306.5" text-anchor="middle" style="font-family:'Liberation Sans',sans-serif;font-size:8px;fill:#177a17;">68.04</text><rect x="1863.5" y="485.8" width="35" height="9" rx="1.5" fill="#fff" stroke="#666666" stroke-width="1"/><text x="1881.0" y="493.3" text-anchor="middle" style="font-family:'Liberation Sans',sans-serif;font-size:8px;fill:#666666;">50.1691</text><rect x="1863.5" y="497.0" width="35" height="9" rx="1.5" fill="#fff" stroke="#1f7a5a" stroke-width="1"/><text x="1881.0" y="504.5" text-anchor="middle" style="font-family:'Liberation Sans',sans-serif;font-size:8px;fill:#1f7a5a;">49.7923</text><rect x="1863.5" y="508.7" width="35" height="9" rx="1.5" fill="#fff" stroke="#ff00ff" stroke-width="1"/><text x="1881.0" y="516.2" text-anchor="middle" style="font-family:'Liberation Sans',sans-serif;font-size:8px;fill:#ff00ff;">43.7187</text><rect x="1863.5" y="520.1" width="35" height="9" rx="1.5" fill="#fff" stroke="#3030ff" stroke-width="1"/><text x="1881.0" y="527.6" text-anchor="middle" style="font-family:'Liberation Sans',sans-serif;font-size:8px;fill:#3030ff;">39.4945</text><rect x="1863.0" y="691.1" width="30" height="9" rx="1.5" fill="#fff" stroke="#ff00ff" stroke-width="1"/><text x="1878.0" y="698.6" text-anchor="middle" style="font-family:'Liberation Sans',sans-serif;font-size:8px;fill:#ff00ff;">40.674</text><rect x="1863.0" y="702.3" width="30" height="9" rx="1.5" fill="#fff" stroke="#3030ff" stroke-width="1"/><text x="1878.0" y="709.8" text-anchor="middle" style="font-family:'Liberation Sans',sans-serif;font-size:8px;fill:#3030ff;">39.626</text><line x1="0" y1="407.5" x2="1914" y2="407.5" stroke="#111" stroke-width="1.2"/><line x1="0" y1="595.5" x2="1914" y2="595.5" stroke="#111" stroke-width="1.2"/><line x1="0" y1="780.5" x2="1914" y2="780.5" stroke="#111" stroke-width="1.2"/><line x1="1861.5" y1="30" x2="1861.5" y2="802" stroke="#111" stroke-width="1.2"/><line x1="1913.5" y1="0" x2="1913.5" y2="804" stroke="#333" stroke-width="1.2"/><line x1="0" y1="803.5" x2="1914" y2="803.5" stroke="#333" stroke-width="1.2"/><rect x="0" y="804.2" width="1914" height="2" fill="#d0d0d0"/><text x="1865.2" y="96.7" style="font-family:'Liberation Sans',sans-serif;font-size:8.2px;fill:#555">90.00</text><text x="1865.2" y="118.4" style="font-family:'Liberation Sans',sans-serif;font-size:8.2px;fill:#555">87.50</text><text x="1865.2" y="140.1" style="font-family:'Liberation Sans',sans-serif;font-size:8.2px;fill:#555">85.00</text><text x="1865.2" y="161.8" style="font-family:'Liberation Sans',sans-serif;font-size:8.2px;fill:#555">82.50</text><text x="1865.2" y="183.6" style="font-family:'Liberation Sans',sans-serif;font-size:8.2px;fill:#555">80.00</text><text x="1865.2" y="205.3" style="font-family:'Liberation Sans',sans-serif;font-size:8.2px;fill:#555">77.50</text><text x="1865.2" y="227.0" style="font-family:'Liberation Sans',sans-serif;font-size:8.2px;fill:#555">75.00</text><text x="1865.2" y="313.8" style="font-family:'Liberation Sans',sans-serif;font-size:8.2px;fill:#555">65.00</text><text x="1865.2" y="335.6" style="font-family:'Liberation Sans',sans-serif;font-size:8.2px;fill:#555">62.50</text><text x="1865.2" y="357.3" style="font-family:'Liberation Sans',sans-serif;font-size:8.2px;fill:#555">60.00</text><text x="1865.2" y="379.0" style="font-family:'Liberation Sans',sans-serif;font-size:8.2px;fill:#555">57.50</text><text x="1865.2" y="400.7" style="font-family:'Liberation Sans',sans-serif;font-size:8.2px;fill:#555">55.00</text><text x="1865.2" y="423.7" style="font-family:'Liberation Sans',sans-serif;font-size:8.2px;fill:#555">100.0000</text><text x="1865.2" y="457.7" style="font-family:'Liberation Sans',sans-serif;font-size:8.2px;fill:#555">80.0000</text><text x="1865.2" y="559.7" style="font-family:'Liberation Sans',sans-serif;font-size:8.2px;fill:#555">20.0000</text><text x="1865.2" y="616.0" style="font-family:'Liberation Sans',sans-serif;font-size:8.2px;fill:#555">100.000</text><text x="1865.2" y="646.7" style="font-family:'Liberation Sans',sans-serif;font-size:8.2px;fill:#555">80.000</text><text x="1865.2" y="677.4" style="font-family:'Liberation Sans',sans-serif;font-size:8.2px;fill:#555">60.000</text><text x="1865.2" y="738.7" style="font-family:'Liberation Sans',sans-serif;font-size:8.2px;fill:#555">20.000</text><text x="1865.2" y="769.4" style="font-family:'Liberation Sans',sans-serif;font-size:8.2px;fill:#555">0.000</text><text x="57.0" y="794" text-anchor="middle" style="font-family:'Liberation Sans',sans-serif;font-size:8.2px;fill:#555;font-size:8.4px;fill:#444;">May</text><text x="120.4" y="794" text-anchor="middle" style="font-family:'Liberation Sans',sans-serif;font-size:8.2px;fill:#555;font-size:8.4px;fill:#444;">16</text><text x="188.3" y="794" text-anchor="middle" style="font-family:'Liberation Sans',sans-serif;font-size:8.2px;fill:#555;font-size:8.4px;fill:#444;">Jun</text><text x="302.5" y="794" text-anchor="middle" style="font-family:'Liberation Sans',sans-serif;font-size:8.2px;fill:#555;font-size:8.4px;fill:#444;">Jul</text><text x="365.4" y="794" text-anchor="middle" style="font-family:'Liberation Sans',sans-serif;font-size:8.2px;fill:#555;font-size:8.4px;fill:#444;">16</text><text x="433.3" y="794" text-anchor="middle" style="font-family:'Liberation Sans',sans-serif;font-size:8.2px;fill:#555;font-size:8.4px;fill:#444;">Aug</text><text x="496.3" y="794" text-anchor="middle" style="font-family:'Liberation Sans',sans-serif;font-size:8.2px;fill:#555;font-size:8.4px;fill:#444;">16</text><text x="558.3" y="794" text-anchor="middle" style="font-family:'Liberation Sans',sans-serif;font-size:8.2px;fill:#555;font-size:8.4px;fill:#444;">Sep</text><text x="678.3" y="794" text-anchor="middle" style="font-family:'Liberation Sans',sans-serif;font-size:8.2px;fill:#555;font-size:8.4px;fill:#444;">Oct</text><text x="741.3" y="794" text-anchor="middle" style="font-family:'Liberation Sans',sans-serif;font-size:8.2px;fill:#555;font-size:8.4px;fill:#444;">16</text><text x="809.2" y="794" text-anchor="middle" style="font-family:'Liberation Sans',sans-serif;font-size:8.2px;fill:#555;font-size:8.4px;fill:#444;">Nov</text><text x="929.6" y="794" text-anchor="middle" style="font-family:'Liberation Sans',sans-serif;font-size:8.2px;fill:#555;font-size:8.4px;fill:#444;">Dec</text><text x="1049.6" y="794" text-anchor="middle" style="font-family:'Liberation Sans',sans-serif;font-size:8.2px;fill:#555;font-size:8.4px;fill:#444;font-weight:bold;">2025</text><text x="1111.0" y="794" text-anchor="middle" style="font-family:'Liberation Sans',sans-serif;font-size:8.2px;fill:#555;font-size:8.4px;fill:#444;">17</text><text x="1174.6" y="794" text-anchor="middle" style="font-family:'Liberation Sans',sans-serif;font-size:8.2px;fill:#555;font-size:8.4px;fill:#444;">Feb</text><text x="1288.0" y="794" text-anchor="middle" style="font-family:'Liberation Sans',sans-serif;font-size:8.2px;fill:#555;font-size:8.4px;fill:#444;">Mar</text><text x="1408.0" y="794" text-anchor="middle" style="font-family:'Liberation Sans',sans-serif;font-size:8.2px;fill:#555;font-size:8.4px;fill:#444;">Apr</text><text x="1528.0" y="794" text-anchor="middle" style="font-family:'Liberation Sans',sans-serif;font-size:8.2px;fill:#555;font-size:8.4px;fill:#444;">May</text><text x="1590.0" y="794" text-anchor="middle" style="font-family:'Liberation Sans',sans-serif;font-size:8.2px;fill:#555;font-size:8.4px;fill:#444;">16</text><text x="1653.0" y="794" text-anchor="middle" style="font-family:'Liberation Sans',sans-serif;font-size:8.2px;fill:#555;font-size:8.4px;fill:#444;">Jun</text><text x="1773.0" y="794" text-anchor="middle" style="font-family:'Liberation Sans',sans-serif;font-size:8.2px;fill:#555;font-size:8.4px;fill:#444;">Jul</text><text x="1835.0" y="794" text-anchor="middle" style="font-family:'Liberation Sans',sans-serif;font-size:8.2px;fill:#555;font-size:8.4px;fill:#444;">16</text><polygon points="1880.6,791.4 1884.2,785.4 1891,785.4 1894.4,791.4 1891,797.4 1884.2,797.4" fill="none" stroke="#222" stroke-width="1.1"/><circle cx="1887.5" cy="791.4" r="2.2" fill="none" stroke="#222" stroke-width="1.1"/></svg>
<div style="position:absolute;left:6.5px;top:41.16px;font-size:12px;line-height:13.80px;color:#333;white-space:nowrap;font-family:'Liberation Sans',sans-serif;">BRENT CRUDE OCT5</div><div style="position:absolute;left:132.5px;top:41.16px;font-size:12px;line-height:13.80px;color:#555;white-space:nowrap;font-family:'Liberation Sans',sans-serif;">&middot;</div><div style="position:absolute;left:140.6px;top:41.16px;font-size:12px;line-height:13.80px;color:#333;white-space:nowrap;font-family:'Liberation Sans',sans-serif;">1D</div><div style="position:absolute;left:159.5px;top:41.16px;font-size:12px;line-height:13.80px;color:#555;white-space:nowrap;font-family:'Liberation Sans',sans-serif;">&middot;</div><div style="position:absolute;left:168px;top:41.16px;font-size:12px;line-height:13.80px;color:#333;white-space:nowrap;font-family:'Liberation Sans',sans-serif;">IEU</div><div style="position:absolute;left:194.5px;top:41.16px;font-size:12px;line-height:13.80px;color:#555;white-space:nowrap;font-family:'Liberation Sans',sans-serif;">&middot;</div><div style="position:absolute;left:203px;top:41.16px;font-size:12px;line-height:13.80px;color:#333;white-space:nowrap;font-family:'Liberation Sans',sans-serif;">Trade Price</div><div style="position:absolute;left:272.5px;top:41.16px;font-size:12px;line-height:13.80px;color:#333;white-space:nowrap;font-family:'Liberation Sans',sans-serif;">O</div><div style="position:absolute;left:282.5px;top:41.16px;font-size:12px;line-height:13.80px;color:#4040ff;white-space:nowrap;font-family:'Liberation Sans',sans-serif;">66.88</div><div style="position:absolute;left:318px;top:41.16px;font-size:12px;line-height:13.80px;color:#333;white-space:nowrap;font-family:'Liberation Sans',sans-serif;">H</div><div style="position:absolute;left:327.8px;top:41.16px;font-size:12px;line-height:13.80px;color:#4040ff;white-space:nowrap;font-family:'Liberation Sans',sans-serif;">67.58</div><div style="position:absolute;left:364px;top:41.16px;font-size:12px;line-height:13.80px;color:#333;white-space:nowrap;font-family:'Liberation Sans',sans-serif;">L</div><div style="position:absolute;left:371px;top:41.16px;font-size:12px;line-height:13.80px;color:#4040ff;white-space:nowrap;font-family:'Liberation Sans',sans-serif;">66.83</div><div style="position:absolute;left:407.5px;top:41.16px;font-size:12px;line-height:13.80px;color:#333;white-space:nowrap;font-family:'Liberation Sans',sans-serif;">C</div><div style="position:absolute;left:416.7px;top:41.16px;font-size:12px;line-height:13.80px;color:#4040ff;white-space:nowrap;font-family:'Liberation Sans',sans-serif;">67.46</div><div style="position:absolute;left:453.6px;top:41.16px;font-size:12px;line-height:13.80px;color:#4040ff;white-space:nowrap;font-family:'Liberation Sans',sans-serif;">0.57 (+0.85%)</div><div style="position:absolute;left:6px;top:64px;width:28px;height:21px;box-sizing:border-box;background:#fff;border:1px solid #d8d8d8;border-radius:3px"></div><svg style="position:absolute;left:0;top:64px" width="40" height="22"><path d="M22 6.8l-3.6 3.6 3.6 3.6" stroke="#222" fill="none" stroke-width="1.5"/></svg><div style="position:absolute;left:6px;top:417px;width:28px;height:21px;box-sizing:border-box;background:#fff;border:1px solid #d8d8d8;border-radius:3px"></div><svg style="position:absolute;left:0;top:417px" width="40" height="22"><path d="M22 6.8l-3.6 3.6 3.6 3.6" stroke="#222" fill="none" stroke-width="1.5"/></svg><div style="position:absolute;left:3px;top:85px;width:750px;height:21px;background:rgba(255,255,255,0.55)"></div><div style="position:absolute;left:3px;top:438px;width:530px;height:20px;background:rgba(255,255,255,0.55)"></div><div style="position:absolute;left:3px;top:603px;width:255px;height:18px;background:rgba(255,255,255,0.55)"></div><div style="position:absolute;left:6.3px;top:87.96px;font-size:12px;line-height:13.80px;color:#333;white-space:nowrap;font-family:'Liberation Sans',sans-serif;">MA 4 close 0</div><div style="position:absolute;left:83.9px;top:87.96px;font-size:12px;line-height:13.80px;color:#ff00ff;white-space:nowrap;font-family:'Liberation Sans',sans-serif;">67.69</div><div style="position:absolute;left:125px;top:87.96px;font-size:12px;line-height:13.80px;color:#333;white-space:nowrap;font-family:'Liberation Sans',sans-serif;">MA 9 close 0</div><div style="position:absolute;left:202.9px;top:87.96px;font-size:12px;line-height:13.80px;color:#00c800;white-space:nowrap;font-family:'Liberation Sans',sans-serif;">69.86</div><div style="position:absolute;left:244.3px;top:87.96px;font-size:12px;line-height:13.80px;color:#333;white-space:nowrap;font-family:'Liberation Sans',sans-serif;">MA 25 close 0</div><div style="position:absolute;left:328.9px;top:87.96px;font-size:12px;line-height:13.80px;color:#a02040;white-space:nowrap;font-family:'Liberation Sans',sans-serif;">69.41</div><div style="position:absolute;left:369.8px;top:87.96px;font-size:12px;line-height:13.80px;color:#333;white-space:nowrap;font-family:'Liberation Sans',sans-serif;">MA 50 close 0</div><div style="position:absolute;left:454.8px;top:87.96px;font-size:12px;line-height:13.80px;color:#10c8d8;white-space:nowrap;font-family:'Liberation Sans',sans-serif;">69.40</div><div style="position:absolute;left:495.8px;top:87.96px;font-size:12px;line-height:13.80px;color:#333;white-space:nowrap;font-family:'Liberation Sans',sans-serif;">MA 100 close 0</div><div style="position:absolute;left:587.3px;top:87.96px;font-size:12px;line-height:13.80px;color:#108810;white-space:nowrap;font-family:'Liberation Sans',sans-serif;">67.96</div><div style="position:absolute;left:628.6px;top:87.96px;font-size:12px;line-height:13.80px;color:#333;white-space:nowrap;font-family:'Liberation Sans',sans-serif;">MA 250 close 0</div><div style="position:absolute;left:720px;top:87.96px;font-size:12px;line-height:13.80px;color:#ff3b3b;white-space:nowrap;font-family:'Liberation Sans',sans-serif;">71.93</div><div style="position:absolute;left:6.3px;top:440.66px;font-size:12px;line-height:13.80px;color:#333;white-space:nowrap;font-family:'Liberation Sans',sans-serif;">RSI 9 Exponential Simple 14</div><div style="position:absolute;left:167.7px;top:440.66px;font-size:12px;line-height:13.80px;color:#4040ff;white-space:nowrap;font-family:'Liberation Sans',sans-serif;">33.2343</div><div style="position:absolute;left:217px;top:440.66px;font-size:12px;line-height:13.80px;color:#1f7a5a;white-space:nowrap;font-family:'Liberation Sans',sans-serif;">48.7470</div><div style="position:absolute;left:269.8px;top:440.66px;font-size:12px;line-height:13.80px;color:#333;white-space:nowrap;font-family:'Liberation Sans',sans-serif;">RSI 14 Exponential Simple 25</div><div style="position:absolute;left:437.5px;top:440.66px;font-size:12px;line-height:13.80px;color:#ff00ff;white-space:nowrap;font-family:'Liberation Sans',sans-serif;">37.4516</div><div style="position:absolute;left:486.9px;top:440.66px;font-size:12px;line-height:13.80px;color:#555;white-space:nowrap;font-family:'Liberation Sans',sans-serif;">49.7445</div><div style="position:absolute;left:6.2px;top:606.16px;font-size:12px;line-height:13.80px;color:#333;white-space:nowrap;font-family:'Liberation Sans',sans-serif;">Stochastic Slow 5 3 3 Simple</div><div style="position:absolute;left:170.5px;top:606.16px;font-size:12px;line-height:13.80px;color:#4040ff;white-space:nowrap;font-family:'Liberation Sans',sans-serif;">10.861</div><div style="position:absolute;left:213px;top:606.16px;font-size:12px;line-height:13.80px;color:#ff00ff;white-space:nowrap;font-family:'Liberation Sans',sans-serif;">10.853</div><div style="position:absolute;left:1865.5px;top:35px;width:42px;height:48px;background:#fff;border:1px solid #e6e6e6;border-radius:3px"></div><div style="position:absolute;left:1869.8px;top:42.16px;font-size:12px;line-height:13.80px;color:#222;white-space:nowrap;font-family:'Liberation Sans',sans-serif;">USD</div><div style="position:absolute;left:1869.8px;top:66.16px;font-size:12px;line-height:13.80px;color:#222;white-space:nowrap;font-family:'Liberation Sans',sans-serif;">bbl</div><svg style="position:absolute;left:0;top:0" width="1913" height="90"><path d="M1899.2 47.2l2.1 2.1 2.1-2.1M1899.2 71.4l2.1 2.1 2.1-2.1" stroke="#222" fill="none" stroke-width="1.1"/></svg>
</body></html>
